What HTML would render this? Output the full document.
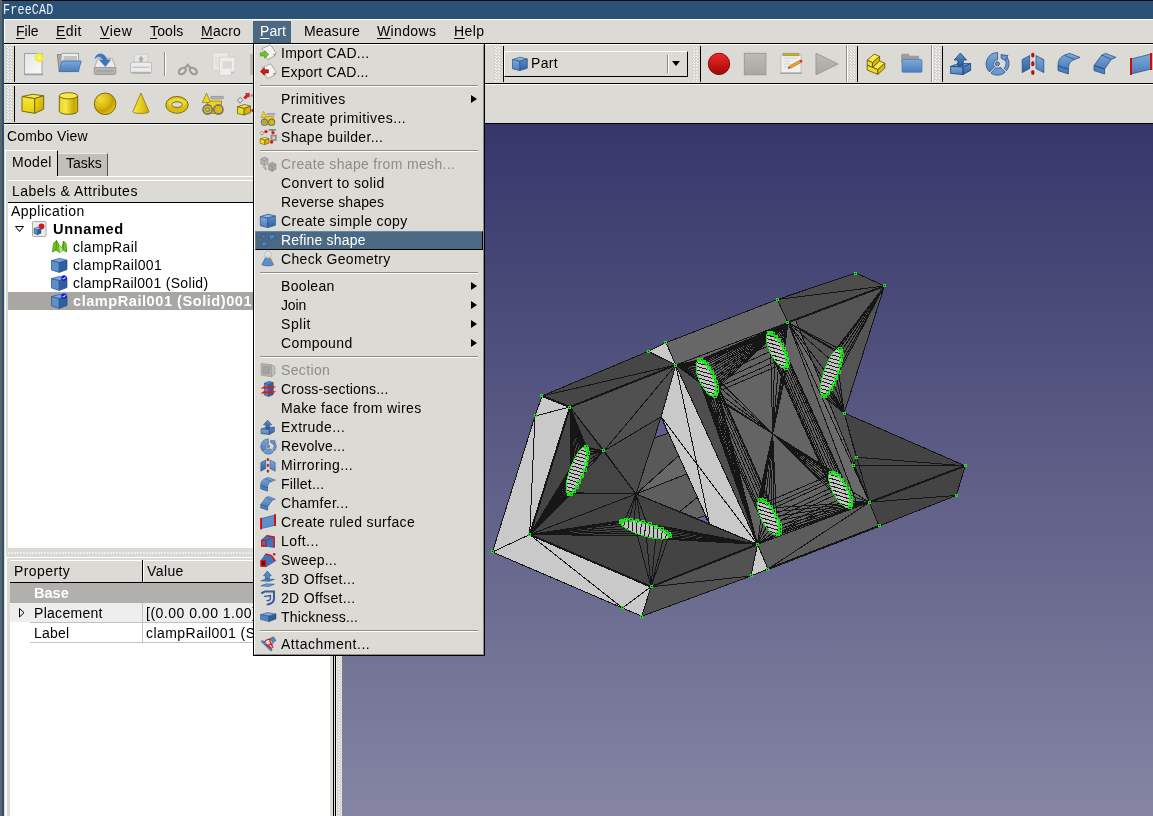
<!DOCTYPE html>
<html>
<head>
<meta charset="utf-8">
<title>FreeCAD</title>
<style>
html,body{margin:0;padding:0;}
body{width:1153px;height:816px;overflow:hidden;position:relative;background:#dcdad5;font-family:"Liberation Sans",sans-serif;font-size:14px;letter-spacing:0.25px;color:#000;}
.abs{position:absolute;}
.t{will-change:transform;position:absolute;white-space:nowrap;line-height:16px;height:16px;}
u{text-decoration:underline;text-underline-offset:2px;text-decoration-thickness:1px;}
#frameL{left:0;top:0;width:2px;height:816px;background:#5e6468;}
#frameL2{left:2px;top:0;width:2px;height:816px;background:#2a5277;}
#title{left:2px;top:0;width:1151px;height:19px;background:#2a5277;border-top:1px solid #0a0a0a;box-sizing:border-box;}
#titletxt{will-change:transform;left:3px;top:2px;font-family:"Liberation Mono",monospace;font-size:11.7px;color:#eef2f6;line-height:16px;transform:scaleY(1.18);transform-origin:0 50%;letter-spacing:0.2px;}
.hline{position:absolute;height:1px;}
.vline{position:absolute;width:1px;}
.handle{position:absolute;width:7px;background-color:#d6d4cf;background-image:radial-gradient(circle at 0.5px 0.5px,#fff 0.55px,rgba(255,255,255,0) 0.75px),radial-gradient(circle at 0.5px 0.5px,#fff 0.55px,rgba(255,255,255,0) 0.75px);background-size:3px 3px,3px 3px;background-position:1px 1px,2px 2px;}
.sep{position:absolute;left:9px;width:216px;height:1px;background:#8e8c88;border-bottom:1px solid #fff;}
.mi{position:absolute;left:30px;white-space:nowrap;line-height:16px;}
.arrow{position:absolute;left:220px;width:0;height:0;border-left:6px solid #000;border-top:4.5px solid transparent;border-bottom:4.5px solid transparent;}
.ico{position:absolute;}
</style>
</head>
<body>
<!-- window frame -->
<div id="frameL" class="abs"></div>
<div id="frameL2" class="abs"></div>
<div id="title" class="abs"></div>
<div id="titletxt" class="abs">FreeCAD</div>

<!-- menubar -->
<div class="hline" style="left:4px;top:19px;width:1149px;background:#fff;"></div>
<div class="vline" style="left:4px;top:19px;height:24px;background:#fff;"></div>
<div id="menubar" class="abs" style="left:5px;top:20px;width:1148px;height:23px;background:#dcdad5;"></div>
<div class="abs" style="left:253px;top:21px;width:38px;height:22px;background:#4b6983;"></div>
<div class="t" style="left:16.0px;top:23px;letter-spacing:0.03px;"><u>F</u>ile</div>
<div class="t" style="left:56.3px;top:23px;letter-spacing:0.39px;"><u>E</u>dit</div>
<div class="t" style="left:99.8px;top:23px;letter-spacing:0.55px;"><u>V</u>iew</div>
<div class="t" style="left:150.1px;top:23px;letter-spacing:0.14px;"><u>T</u>ools</div>
<div class="t" style="left:201.3px;top:23px;letter-spacing:0.24px;"><u>M</u>acro</div>
<div class="t" style="left:259.6px;top:23px;color:#fff;letter-spacing:0.08px;"><u>P</u>art</div>
<div class="t" style="left:303.6px;top:23px;letter-spacing:0.20px;">Measure</div>
<div class="t" style="left:377.3px;top:23px;letter-spacing:0.36px;"><u>W</u>indows</div>
<div class="t" style="left:454.2px;top:23px;letter-spacing:0.43px;"><u>H</u>elp</div>
<div class="hline" style="left:4px;top:43px;width:1149px;background:#000;height:1px;"></div>
<div class="hline" style="left:4px;top:44px;width:1149px;background:#fff;"></div>

<!-- toolbar row 1 -->
<div id="tb1" class="abs" style="left:4px;top:45px;width:1149px;height:38px;background:#dcdad5;"></div>
<div class="hline" style="left:4px;top:83px;width:1149px;background:#000;height:1px;"></div>
<div class="hline" style="left:4px;top:84px;width:1149px;background:#fff;"></div>
<!-- toolbar row 2 -->
<div id="tb2" class="abs" style="left:4px;top:85px;width:1149px;height:38px;background:#dcdad5;"></div>
<div class="hline" style="left:4px;top:123px;width:1149px;background:#000;height:1px;"></div>
<div class="hline" style="left:4px;top:124px;width:340px;background:#fff;"></div>

<!-- toolbar handles / separators -->
<div class="handle" style="left:6px;top:46px;height:35px;"></div>
<div class="vline" style="left:14px;top:46px;height:36px;background:#000;width:1px;"></div>
<div class="handle" style="left:6px;top:86px;height:35px;"></div>
<div class="vline" style="left:14px;top:86px;height:36px;background:#000;width:1px;"></div>
<div class="vline" style="left:164px;top:52px;height:24px;background:#8e8c88;"></div>
<div class="vline" style="left:165px;top:52px;height:24px;background:#fff;"></div>
<div class="handle" style="left:494px;top:46px;height:35px;"></div>
<div class="vline" style="left:503px;top:46px;height:36px;background:#000;width:1px;"></div>
<div class="handle" style="left:692px;top:46px;height:35px;"></div>
<div class="vline" style="left:700px;top:46px;height:36px;background:#000;width:1px;"></div>
<div class="vline" style="left:846px;top:45px;height:37px;background:#8e8c88;"></div>
<div class="vline" style="left:847px;top:45px;height:37px;background:#fff;"></div>
<div class="handle" style="left:849px;top:46px;height:35px;"></div>
<div class="vline" style="left:857px;top:46px;height:36px;background:#000;width:1px;"></div>
<div class="vline" style="left:931px;top:45px;height:37px;background:#8e8c88;"></div>
<div class="vline" style="left:932px;top:45px;height:37px;background:#fff;"></div>
<div class="handle" style="left:934px;top:46px;height:35px;"></div>
<div class="vline" style="left:942px;top:46px;height:36px;background:#000;width:1px;"></div>
<!-- workbench combo -->
<div class="abs" style="left:504px;top:51px;width:184px;height:26px;box-sizing:border-box;border-top:1.5px solid #fff;border-left:1.5px solid #fff;border-right:1.5px solid #000;border-bottom:1.5px solid #000;background:#dcdad5;"></div>
<div class="vline" style="left:667px;top:55px;height:18px;background:#8e8c88;"></div>
<div class="vline" style="left:668px;top:55px;height:18px;background:#fff;"></div>
<div class="abs" style="left:672px;top:61px;width:0;height:0;border-top:5px solid #000;border-left:4.5px solid transparent;border-right:4.5px solid transparent;"></div>
<div class="t" style="left:531px;top:55px;letter-spacing:0.3px;">Part</div>

<svg class="abs" style="left:0;top:0;" width="1153" height="124" viewBox="0 0 1153 124">
<defs>
<linearGradient id="gPage" x1="0" y1="0" x2="1" y2="1"><stop offset="0" stop-color="#e4e4e4"/><stop offset="1" stop-color="#fafafa"/></linearGradient>
<radialGradient id="gGlow"><stop offset="0" stop-color="#ffffe0"/><stop offset="0.35" stop-color="#f8f040"/><stop offset="0.8" stop-color="#f2ea30" stop-opacity="0.85"/><stop offset="1" stop-color="#f2ea30" stop-opacity="0"/></radialGradient>
<linearGradient id="gBlue" x1="0" y1="0" x2="0" y2="1"><stop offset="0" stop-color="#7fa8d8"/><stop offset="1" stop-color="#4a7ebd"/></linearGradient>
<linearGradient id="gBlueD" x1="0" y1="0" x2="0" y2="1"><stop offset="0" stop-color="#5d8fcb"/><stop offset="1" stop-color="#2f5f9f"/></linearGradient>
<linearGradient id="gGrey" x1="0" y1="0" x2="0" y2="1"><stop offset="0" stop-color="#bdbbb7"/><stop offset="1" stop-color="#a9a7a3"/></linearGradient>
<linearGradient id="gRed" x1="0" y1="0" x2="0" y2="1"><stop offset="0" stop-color="#f02a2a"/><stop offset="1" stop-color="#a00606"/></linearGradient>
<linearGradient id="gYelF" x1="0" y1="0" x2="0" y2="1"><stop offset="0" stop-color="#f7e63a"/><stop offset="1" stop-color="#e6cf10"/></linearGradient>
<linearGradient id="gYelR" x1="0" y1="0" x2="1" y2="1"><stop offset="0" stop-color="#f2dc18"/><stop offset="1" stop-color="#c4a400"/></linearGradient>
<linearGradient id="gCyl" x1="0" y1="0" x2="1" y2="0"><stop offset="0" stop-color="#e8d020"/><stop offset="0.35" stop-color="#f8e848"/><stop offset="0.8" stop-color="#c8a800"/><stop offset="1" stop-color="#d8bc10"/></linearGradient>
<radialGradient id="gSph" cx="0.3" cy="0.28" r="0.75"><stop offset="0" stop-color="#f0dc38"/><stop offset="0.55" stop-color="#d8b810"/><stop offset="0.75" stop-color="#c4a000"/><stop offset="1" stop-color="#e0c418"/></radialGradient>
<linearGradient id="gCone" x1="0" y1="0" x2="1" y2="0"><stop offset="0" stop-color="#f6e640"/><stop offset="0.5" stop-color="#e8d020"/><stop offset="1" stop-color="#c8a800"/></linearGradient>
</defs>
<!-- new -->
<g>
<rect x="24" y="73.5" width="19" height="1.8" fill="#8a8a88" opacity="0.7"/>
<rect x="24.5" y="53.5" width="17.5" height="20.5" fill="url(#gPage)" stroke="#a2a2a0" stroke-width="1"/>
<circle cx="39.3" cy="57.6" r="5.2" fill="url(#gGlow)"/>
</g>
<!-- open -->
<g>
<path d="M57.3 54.6 L61.5 54.6 L62.5 53.4 L78.5 53.4 L78.8 71.5 L59.2 71.5 Z" fill="#a8a8a6" stroke="#7c7c7a" stroke-width="0.8"/>
<path d="M61.8 53.6 L78.4 53.6 L78.4 62 L60.5 66 Z" fill="#efefef" stroke="#9a9a98" stroke-width="0.6"/>
<rect x="63.5" y="56" width="13.5" height="5" fill="#c2c2c0"/>
<path d="M62 61 L81.2 61 L78.2 71.6 L59 71.6 Z" fill="url(#gBlue)" stroke="#3f74b4" stroke-width="0.9"/>
</g>
<!-- save -->
<g>
<path d="M98 58.4 L112.2 58.4 L115.8 68 L94.2 68 Z" fill="#ececec" stroke="#a0a09e" stroke-width="0.8"/>
<rect x="94.3" y="67.6" width="21.4" height="6.8" rx="1" fill="#b7b7b5" stroke="#8c8c8a" stroke-width="0.8"/>
<rect x="96.5" y="69.8" width="17" height="2.6" fill="#a6a6a4"/>
<path d="M95 59 C95 53.5 103.5 50.5 107.3 59.8 L110.8 59.8 L105.4 66.8 L99 59.8 L102.6 59.8 C101.5 56.2 97 55.6 95 59 Z" fill="#3d73b8" stroke="#5d8ed0" stroke-width="0.5"/>
</g>
<!-- print -->
<g>
<rect x="134.3" y="54.2" width="13.6" height="9" fill="#e6e6e6" stroke="#c8c8c6" stroke-width="0.7"/>
<path d="M141 56 L143.9 59.2 L142.4 59.2 L142.4 62.2 L139.6 62.2 L139.6 59.2 L138.1 59.2 Z" fill="#aaaaa8"/>
<rect x="130.6" y="62.2" width="20.9" height="11.2" rx="2.2" fill="#ececec" stroke="#b4b4b2" stroke-width="0.9"/>
<rect x="132.3" y="66.4" width="17.4" height="1.5" rx="0.7" fill="#c6c6c4"/>
<rect x="131.4" y="71.8" width="19.3" height="1.8" rx="0.9" fill="#b0b0ae"/>
</g>
<!-- cut -->
<g fill="none">
<path d="M181.2 53.4 L183 53 L191.3 66.5 L189 67.5 Z" fill="#e2e1dd" stroke="#cfcdc8" stroke-width="0.6"/>
<path d="M194.3 53.4 L192.5 53 L184.2 66.5 L186.5 67.5 Z" fill="#e2e1dd" stroke="#cfcdc8" stroke-width="0.6"/>
<ellipse cx="182.3" cy="71" rx="4" ry="2.7" transform="rotate(-38 182.3 71)" stroke="#9c9a96" stroke-width="2.1"/>
<ellipse cx="193.3" cy="71" rx="4" ry="2.7" transform="rotate(38 193.3 71)" stroke="#9c9a96" stroke-width="2.1"/>
<path d="M185 68 L187.8 64.8 L190.5 68" stroke="#9c9a96" stroke-width="2"/>
</g>
<!-- copy -->
<g>
<rect x="212.7" y="52.8" width="15.6" height="17.7" fill="#e9e8e5" stroke="#d0cfcb" stroke-width="0.8"/>
<path d="M215 58h7M215 60.5h7M215 63h7M215 65.5h7" stroke="#d4d3cf" stroke-width="0.8"/>
<path d="M219.6 57.2 L234.8 57.2 L234.8 71.5 L230.8 75.3 L219.6 75.3 Z" fill="#efeeec" stroke="#cfcecb" stroke-width="0.8"/>
<path d="M234.8 71.5 L230.8 75.3 L230.8 71.5 Z" fill="#c4c3c0"/>
<rect x="222.5" y="61.2" width="9.5" height="7.5" fill="#dadad8"/>
</g>
<!-- paste (clipped by menu) -->
<rect x="250.3" y="54" width="3" height="21" fill="#b4b2ae"/>
<!-- cube -->
<g stroke="#6e5e08" stroke-width="0.9" stroke-linejoin="round">
<path d="M22 96.5 L32.6 94.3 L43.7 95.8 L34.7 98.6 Z" fill="#f8ea48"/>
<path d="M22 96.5 L34.7 98.6 L34.7 113.3 L22 111.2 Z" fill="url(#gYelF)"/>
<path d="M34.7 98.6 L43.7 95.8 L43.7 109.2 L34.7 113.3 Z" fill="url(#gYelR)"/>
</g>
<!-- cylinder -->
<g stroke="#6e5e08" stroke-width="0.9">
<path d="M59.3 95.8 L59.3 111.3 A9.2 3 0 0 0 77.7 111.3 L77.7 95.8 Z" fill="url(#gCyl)"/>
<ellipse cx="68.5" cy="95.8" rx="9.2" ry="3.1" fill="#f8e848"/>
</g>
<!-- sphere -->
<circle cx="105.1" cy="103.8" r="10.8" fill="url(#gSph)" stroke="#6e5e08" stroke-width="0.9"/>
<!-- cone -->
<path d="M140.9 93 L149 111.8 A8 1.6 0 0 1 132.8 111.8 Z" fill="url(#gCone)" stroke="#8a7608" stroke-width="0.8" stroke-linejoin="round"/>
<!-- torus -->
<g>
<ellipse cx="177" cy="104.9" rx="11.2" ry="8.4" fill="#e4c818" stroke="#6e5e08" stroke-width="0.9"/>
<ellipse cx="177" cy="106.2" rx="9.5" ry="6" fill="#d0b208" opacity="0.55"/>
<ellipse cx="177" cy="103.3" rx="8.5" ry="4.6" fill="#f2e040" opacity="0.8"/>
<ellipse cx="177" cy="104.6" rx="5.4" ry="2.8" fill="#dcdad5" stroke="#6e5e08" stroke-width="0.9"/>
</g>
<!-- primitives -->
<g id="icoPrims">
<path d="M206.5 93.2 L210.6 102.6 L202.4 102.6 Z" fill="#f0d820" stroke="#8a7608" stroke-width="0.7"/>
<rect x="210.6" y="96.4" width="13" height="2.4" rx="1.2" fill="#b8b8b4" stroke="#808480" stroke-width="0.7"/>
<path d="M207 103.5 L211 101 L221.5 101 L221.5 113.5 L207 113.5 Z" fill="#ecd418" stroke="#8a7608" stroke-width="0.7"/>
<circle cx="207.6" cy="109.5" r="4.6" fill="#d8c030" stroke="#70746e" stroke-width="1.6"/>
<circle cx="207.6" cy="109.5" r="2" fill="none" stroke="#70746e" stroke-width="1"/>
<circle cx="218.4" cy="109.5" r="4.6" fill="#dcb808" stroke="#70746e" stroke-width="1.6"/>
</g>
<!-- builder (clipped) -->
<g>
<path d="M240.2 97.3 L243 100.2 L240.2 103.2 L237.4 100.2 Z" fill="#dcdad5" stroke="#7c8486" stroke-width="1"/>
<path d="M243.6 97.4 L246.4 94.6 L245.2 93.6 L249.4 93.2 L249.2 97.4 L248.2 96.4 L245.4 99.2 Z" fill="#e01818" stroke="#b00808" stroke-width="0.4"/>
<rect x="250.5" y="94.4" width="2.7" height="2.2" fill="#90908e"/>
<path d="M237.5 106.8 L244.5 104.5 L250.5 106.2 L244.2 108.4 Z" fill="#f8ea48" stroke="#6e5e08" stroke-width="0.8"/>
<path d="M237.5 106.8 L244.2 108.4 L244.2 115 L237.5 113.5 Z" fill="#f2dc20" stroke="#6e5e08" stroke-width="0.8"/>
<path d="M244.2 108.4 L250.5 106.2 L250.5 112.6 L244.2 115 Z" fill="#d4b408" stroke="#6e5e08" stroke-width="0.8"/>
<circle cx="253" cy="110.5" r="1.8" fill="#e01818"/>
</g>
<!-- combo cube -->
<g id="icoCube" stroke="#27518a" stroke-width="0.7" stroke-linejoin="round">
<path d="M512.5 59.6 L520 57.2 L527.3 59 L519.8 61.2 Z" fill="#8bb4e4"/>
<path d="M512.5 59.6 L519.8 61.2 L519.8 70.6 L512.5 68.8 Z" fill="url(#gBlue)"/>
<path d="M519.8 61.2 L527.3 59 L527.3 68.2 L519.8 70.6 Z" fill="url(#gBlueD)"/>
</g>
<!-- record -->
<circle cx="719" cy="63.9" r="10.7" fill="url(#gRed)" stroke="#7a0a0a" stroke-width="0.9"/>
<!-- stop -->
<rect x="744.3" y="53.3" width="21.6" height="21.5" fill="url(#gGrey)" stroke="#989692" stroke-width="0.9"/>
<!-- notepad -->
<g>
<rect x="780.3" y="72.2" width="21.4" height="1.8" fill="#a4a4a2"/>
<rect x="781" y="55" width="20" height="17.6" fill="#f0f0ee" stroke="#b8b8b6" stroke-width="0.8"/>
<rect x="783" y="53.2" width="16" height="2.6" fill="#c8b040" stroke="#9a8420" stroke-width="0.5"/>
<path d="M784 58.2h13M784 61h6M784 64h6M784 67h6" stroke="#cfcfcd" stroke-width="1"/>
<path d="M788 68.6 L789.8 65.6 L799.6 60.4 L801 62.6 L791.2 68 Z" fill="#e8a028" stroke="#a87010" stroke-width="0.5"/>
<path d="M799.2 60.6 L801.4 59.6 L802.6 61.4 L800.8 62.8 Z" fill="#e03030"/>
<path d="M788 68.6 L789.2 66.6 L790 67.8 Z" fill="#444"/>
</g>
<!-- play -->
<path d="M816 53.2 L838.2 64 L816 74.8 Z" fill="url(#gGrey)" stroke="#989692" stroke-width="0.9" stroke-linejoin="round"/>
<!-- stair -->
<g stroke="#5a4e08" stroke-width="0.8" stroke-linejoin="round">
<path d="M867.2 60.2 L874.2 54 L879.6 56.4 L872.6 62.6 Z" fill="#f8ea48"/>
<path d="M867.2 60.2 L872.6 62.6 L872.6 67.4 L867.2 65.2 Z" fill="#f0dc28"/>
<path d="M872.6 62.6 L879.6 56.4 L879.6 61 L872.6 67.4 Z" fill="#d8bc10"/>
<path d="M872.6 67.4 L879.6 61 L884.8 63.2 L877.8 69.6 Z" fill="#f8ea48"/>
<path d="M867.2 65.2 L877.8 69.6 L877.8 74.4 L867.2 70 Z" fill="#f0dc28"/>
<path d="M877.8 69.6 L884.8 63.2 L884.8 68 L877.8 74.4 Z" fill="#d8bc10"/>
</g>
<!-- folder -->
<g>
<path d="M901.6 55.2 Q901.6 54.2 902.6 54.2 L908.4 54.2 L909.6 56.2 L918.6 56.2 L918.6 62 L901.6 62 Z" fill="#9c9c9a" stroke="#8a8a88" stroke-width="0.6"/>
<rect x="902" y="59.4" width="20" height="12.8" rx="1" fill="url(#gBlue)" stroke="#4a7ebd" stroke-width="0.8"/>
</g>
<!-- extrude -->
<g id="icoExtrude" stroke="#1e4478" stroke-width="0.8" stroke-linejoin="round">
<path d="M950.6 66.4 L958.2 63.6 L970.6 63.6 L963 67.2 Z" fill="#6a9ad4"/>
<path d="M950.6 66.4 L963 67.2 L963 74.6 L950.6 73.4 Z" fill="url(#gBlue)"/>
<path d="M963 67.2 L970.6 63.6 L970.6 70.4 L963 74.6 Z" fill="url(#gBlueD)"/>
<path d="M960.4 53 L966.6 60 L963.2 60 L963.2 65.4 L957.8 65.4 L957.8 60 L954.2 60 Z" fill="url(#gBlueD)"/>
</g>
<!-- revolve -->
<g id="icoRevolve">
<path d="M997.6 52.6 A11.3 11.3 0 0 0 989.6 72 L994.7 66.6 A4 4 0 0 1 997.6 59.8 Z" fill="url(#gBlue)" stroke="#1e4478" stroke-width="0.7"/>
<path d="M991 73.2 A11.3 11.3 0 0 0 1005.2 72.2 L1000.4 67.2 A4 4 0 0 1 995.8 67.6 Z" fill="#6a9ad4" stroke="#1e4478" stroke-width="0.7"/>
<path d="M1006.4 70.8 A11.3 11.3 0 0 0 1007.4 57.6 L1004.6 58.6 A8.5 8.5 0 0 1 1004.2 68.4 Z" fill="#6a9ad4" stroke="#1e4478" stroke-width="0.7"/>
<path d="M1001 54.6 L1008 55.6 L1005 60.4 L1001.2 58.4 Z" fill="#6a9ad4" stroke="#1e4478" stroke-width="0.7"/>
<circle cx="997.4" cy="63.8" r="2" fill="#6a9ad4" stroke="#1e4478" stroke-width="0.8"/>
</g>
<!-- mirror -->
<g id="icoMirror"><g stroke="#1e4478" stroke-width="0.7" stroke-linejoin="round">
<path d="M1022.2 59.6 L1029.6 55.6 L1029.6 68.6 L1022.2 72.6 Z" fill="url(#gBlueD)"/>
<path d="M1036 55.6 L1043.8 59.6 L1043.8 72.6 L1036 68.6 Z" fill="url(#gBlue)"/>
</g>
<g fill="#c80c0c" stroke="#7a0606" stroke-width="0.4">
<rect x="1031.5" y="53" width="2.6" height="4.2" rx="1.2"/><rect x="1031.5" y="61.6" width="2.6" height="4.4" rx="1.2"/><rect x="1031.5" y="70.4" width="2.6" height="4.2" rx="1.2"/>
</g></g>
<!-- fillet -->
<g id="icoFillet" stroke="#1e4478" stroke-width="0.7" stroke-linejoin="round">
<path d="M1058 65.8 C1058 59 1061 55.5 1069.8 53.4 L1080 57.4 L1074.6 59.4 C1070 61 1068.4 64 1068.4 69.2 Z" fill="url(#gBlue)"/>
<path d="M1058 65.8 L1068.4 69.2 L1068.4 74 L1058 70.6 Z" fill="#4a7ebd"/>
<path d="M1064.5 55.4 L1074.6 59.4" fill="none"/>
</g>
<!-- chamfer -->
<g id="icoChamfer" stroke="#1e4478" stroke-width="0.7" stroke-linejoin="round">
<path d="M1094 65.6 L1101.8 55 L1105.8 53.4 L1116 57.4 L1111.2 59.4 L1104.6 69 Z" fill="url(#gBlue)"/>
<path d="M1094 65.6 L1104.6 69 L1104.6 74 L1094 70.6 Z" fill="#4a7ebd"/>
<path d="M1101.8 55 L1111.2 59.4" fill="none"/>
</g>
<!-- ruled -->
<g id="icoRuled">
<path d="M1131 59 L1151 54 L1151 69 L1131 74 Z" fill="url(#gBlue)" stroke="#1e4478" stroke-width="0.7"/>
<rect x="1130" y="58" width="2" height="17" fill="#d40808"/>
<rect x="1150" y="53" width="2.2" height="17" fill="#d40808"/>
</g>
</svg>


<!-- combo view dock -->
<div class="t" style="left:6.5px;top:128px;letter-spacing:0.17px;">Combo View</div>
<!-- tabs -->
<div class="abs" style="left:58px;top:153px;width:50px;height:23px;background:#c1bfba;border-top:1px solid #eceae6;border-right:1.5px solid #55534f;box-sizing:border-box;"></div>
<div class="abs" style="left:5px;top:150px;width:53px;height:27px;background:#dcdad5;border-top:1.5px solid #fff;border-left:1px solid #fff;border-right:1.5px solid #000;box-sizing:border-box;"></div>
<div class="hline" style="left:57px;top:176px;width:277px;background:#fff;"></div>
<div class="vline" style="left:5px;top:176px;height:640px;background:#fff;"></div>
<div class="t" style="left:11.5px;top:154px;letter-spacing:0.33px;">Model</div>
<div class="t" style="left:65.5px;top:155px;letter-spacing:0.00px;">Tasks</div>
<!-- tree header -->
<div class="hline" style="left:8px;top:180px;width:323px;background:#fff;"></div>
<div class="t" style="left:11.5px;top:183px;letter-spacing:0.48px;">Labels &amp; Attributes</div>
<div class="hline" style="left:8px;top:202px;width:323px;background:#000;"></div>
<!-- tree -->
<div class="abs" style="left:8px;top:203px;width:322px;height:345px;background:#fff;"></div>
<div class="t" style="left:10.5px;top:203px;letter-spacing:0.48px;">Application</div>
<div class="t" style="left:52.5px;top:221px;font-weight:bold;font-size:14.6px;letter-spacing:0.61px;">Unnamed</div>
<div class="t" style="left:73.0px;top:239px;letter-spacing:0.35px;">clampRail</div>
<div class="t" style="left:73.0px;top:257px;letter-spacing:0.36px;">clampRail001</div>
<div class="t" style="left:73.0px;top:275px;letter-spacing:0.31px;">clampRail001 (Solid)</div>
<div class="abs" style="left:8px;top:292px;width:322px;height:18px;background:#a9a7a3;"></div>
<div class="t" style="left:73.0px;top:293px;font-weight:bold;color:#fff;font-size:14.6px;letter-spacing:0.52px;">clampRail001 (Solid)001</div>
<!-- splitter -->
<div class="abs" style="left:8px;top:552px;width:323px;height:2px;background-image:radial-gradient(circle at 0.5px 0.5px,#fff 0.55px,rgba(255,255,255,0) 0.75px),radial-gradient(circle at 0.5px 0.5px,#fff 0.55px,rgba(255,255,255,0) 0.75px);background-size:3px 3px,3px 3px;background-position:0 0,1px 1px;"></div>
<!-- property view -->
<div class="hline" style="left:6px;top:557px;width:328px;background:#fff;"></div>
<div class="vline" style="left:6px;top:557px;height:259px;background:#fff;"></div>
<div class="hline" style="left:10px;top:560px;width:321px;background:#fff;"></div>
<div class="t" style="left:14.0px;top:563px;letter-spacing:0.42px;">Property</div>
<div class="t" style="left:146.5px;top:563px;letter-spacing:0.40px;">Value</div>
<div class="vline" style="left:142px;top:560px;height:22px;background:#000;"></div>
<div class="vline" style="left:143px;top:560px;height:22px;background:#fff;"></div>
<div class="hline" style="left:10px;top:582px;width:321px;background:#000;"></div>
<div class="abs" style="left:10px;top:583px;width:320px;height:233px;background:#fff;"></div>
<div class="abs" style="left:10px;top:583px;width:320px;height:20px;background:#b2b0ac;"></div>
<div class="t" style="left:33.5px;top:585px;font-weight:bold;color:#fff;font-size:14.6px;letter-spacing:-0.02px;">Base</div>
<div class="abs" style="left:10px;top:603px;width:320px;height:19px;background:#eeeeee;"></div>
<div class="t" style="left:33.5px;top:605px;letter-spacing:0.29px;">Placement</div>
<div class="t" style="left:146px;top:605px;letter-spacing:0.5px;">[(0.00 0.00 1.00); 0.00 &deg;; (0.00 0.00 0.00)]</div>
<div class="hline" style="left:30px;top:622px;width:300px;background:#c4c2be;"></div>
<div class="t" style="left:33.5px;top:625px;letter-spacing:0.19px;">Label</div>
<div class="t" style="left:146px;top:625px;letter-spacing:0.45px;">clampRail001 (Solid)001</div>
<div class="hline" style="left:30px;top:642px;width:300px;background:#c4c2be;"></div>
<div class="vline" style="left:142px;top:603px;height:40px;background:#c4c2be;"></div>
<!-- dock right edge / splitter -->
<div class="abs" style="left:330px;top:124px;width:12px;height:692px;background:#dcdad5;"></div>
<div class="vline" style="left:333px;top:124px;height:692px;background:#000;"></div>
<div class="vline" style="left:335px;top:124px;height:692px;background:#000;"></div>
<div class="vline" style="left:336px;top:124px;height:692px;background:#f0efec;"></div>
<div class="abs" style="left:337px;top:124px;width:4px;height:692px;background-color:#d6d4cf;background-image:radial-gradient(circle at 0.5px 0.5px,#fff 0.55px,rgba(255,255,255,0) 0.75px),radial-gradient(circle at 0.5px 0.5px,#fff 0.55px,rgba(255,255,255,0) 0.75px);background-size:3px 3px,3px 3px;background-position:1px 1px,2px 2px;"></div>
<div class="vline" style="left:341px;top:124px;height:692px;background:#e6e5e1;"></div>
<svg class="abs" style="left:0;top:200px;" width="260" height="440" viewBox="0 200 260 440">
<!-- tree expander -->
<path d="M15.5 226.5 L23.5 226.5 L19.5 231.5 Z" fill="#fff" stroke="#000" stroke-width="1"/>
<!-- doc icon -->
<rect x="32.5" y="221.5" width="13.5" height="15" rx="1" fill="#ececea" stroke="#9a9a98" stroke-width="0.8"/>
<circle cx="41.5" cy="226.4" r="2.9" fill="#e01414"/>
<path d="M34 228.6 L37.6 227 L41 228.4 L37.4 230 Z" fill="#8bb4e4" stroke="#27518a" stroke-width="0.5"/>
<path d="M34 228.6 L37.4 230 L37.4 234.8 L34 233.4 Z" fill="#5d8fcb" stroke="#27518a" stroke-width="0.5"/>
<path d="M37.4 230 L41 228.4 L41 233.2 L37.4 234.8 Z" fill="#2f5f9f" stroke="#27518a" stroke-width="0.5"/>
<!-- mesh icon -->
<path d="M52.5 252 L53.5 243.5 L56.5 240.5 L59 245 L62 248.5 L63.5 241 L66 243.5 L66.6 252 L63 250 L59.5 252.6 L56 250 Z" fill="#6ec820" stroke="#3a8a08" stroke-width="0.8" stroke-linejoin="round"/>
<path d="M56.5 240.5 L56 250 M59 245 L59.5 252.6 M63.5 241 L63 250" stroke="#3a8a08" stroke-width="0.8" fill="none"/>
<path d="M59 245 L62 248.5 L63 250 L59.5 252.6 Z" fill="#b8e878"/>
<!-- cube icons -->
<g id="tcube" stroke="#27518a" stroke-width="0.7" stroke-linejoin="round">
<path d="M51.5 260.6 L59.5 258.4 L67 260.2 L59.3 262.6 Z" fill="#7daae0"/>
<path d="M51.5 260.6 L59.3 262.6 L59.3 272.4 L51.5 270 Z" fill="#5d8fcb"/>
<path d="M59.3 262.6 L67 260.2 L67 269.6 L59.3 272.4 Z" fill="#2f5f9f"/>
</g>
<use href="#tcube" y="18"/>
<use href="#tcube" y="36"/>
<circle cx="64" cy="278" r="2.8" fill="#1818e8"/>
<path d="M62.6 278 L63.7 279.2 L65.6 276.8" stroke="#fff" stroke-width="1" fill="none"/>
<circle cx="64" cy="296" r="2.8" fill="#1818e8"/>
<path d="M62.6 296 L63.7 297.2 L65.6 294.8" stroke="#fff" stroke-width="1" fill="none"/>
<!-- property expander -->
<path d="M19.5 608.5 L24 612.7 L19.5 617 Z" fill="none" stroke="#000" stroke-width="1"/>
</svg>


<!-- 3D VIEW -->
<div id="view3d" class="abs" style="left:342px;top:124px;width:811px;height:692px;background:linear-gradient(#36366a,#8585a3);overflow:hidden;">
<!-- MODEL-START -->
<svg class="abs" style="left:-342px;top:-124px;" width="1153" height="816" viewBox="0 0 1153 816">
<polygon points="542.0,396.0 648.2,351.4 675.8,365.0 570.0,407.0" fill="#464646" />
<polygon points="666.0,342.7 777.2,299.5 788.0,322.5 675.8,365.0" fill="#676767" />
<polygon points="777.2,299.5 856.0,273.0 884.4,286.0 788.0,322.5" fill="#4d4d4d" />
<polygon points="788.0,322.5 884.4,286.0 844.2,413.0 856.2,457.2 853.4,465.8 869.4,502.2" fill="#545454" />
<polygon points="844.2,413.0 965.2,465.8 956.4,495.4 879.0,526.0 869.4,502.2 853.4,465.8 856.2,457.2" fill="#444444" />
<polygon points="675.8,365.0 788.0,322.5 869.4,502.2 757.5,544.3" fill="#646464" />
<polygon points="788.0,322.5 795.5,320.0 869.4,502.2 857.0,503.5" fill="#6b6b6b" />
<polygon points="757.5,544.3 869.4,502.2 879.0,526.0 768.0,569.0" fill="#5c5c5c" />
<polygon points="570.0,407.0 675.8,365.0 661.1,416.8 654.3,438.0 636.0,494.0 529.7,534.6" fill="#4a4a4a" />
<polygon points="661.1,416.8 668.0,433.3 654.3,438.0" fill="#5e5e8e" />
<polygon points="654.3,438.0 668.0,433.3 709.5,524.0 696.6,518.4 636.0,494.0" fill="#5a5a5a" />
<polygon points="654.3,438.0 668.0,433.3 678.7,455.6 636.0,494.0" fill="#595959" />
<polygon points="636.0,494.0 678.7,455.6 686.7,474.0" fill="#686868" />
<polygon points="636.0,494.0 686.7,474.0 696.9,497.7 680.5,511.0" fill="#5e5e5e" />
<polygon points="680.5,511.0 696.9,497.7 705.0,515.7 696.6,518.4" fill="#646464" />
<polygon points="675.8,365.0 698.5,367.5 757.5,544.3" fill="#4e4e4e" />
<polygon points="696.6,518.4 705.0,515.7 709.5,524.0" fill="#66669a" />
<polygon points="529.7,534.6 636.0,494.0 696.6,518.4 709.5,524.0 757.5,544.3 651.0,586.8" fill="#434343" />
<polygon points="651.0,586.8 757.5,544.3 751.0,576.0 641.8,616.2" fill="#525252" />
<polygon points="542.0,396.0 535.0,416.0 492.4,552.0 529.7,534.6 570.0,407.0" fill="#c9c9c9" />
<polygon points="492.4,552.0 622.5,608.0 641.8,616.2 651.0,586.8 529.7,534.6" fill="#c9c9c9" />
<polygon points="648.2,351.4 666.0,342.7 675.8,365.0" fill="#c9c9c9" />
<polygon points="675.8,365.0 661.1,416.8 709.5,524.0 757.5,544.3" fill="#c9c9c9" />
<polygon points="757.5,544.3 768.0,569.0 751.0,576.0" fill="#c9c9c9" />
<polygon points="570.0,407.0 604.0,450.8 636.0,494.0 529.7,534.6" fill="#454545"/>
<polygon points="570.0,407.0 675.8,365.0 661.1,416.8 604.0,450.8" fill="#505050"/>
<polygon points="604.0,450.8 661.1,416.8 654.3,438.0 636.0,494.0" fill="#4c4c4c"/>
<g stroke="#161616" shape-rendering="crispEdges" fill="none">
<line x1="542.0" y1="396.0" x2="648.2" y2="351.4" stroke-width="1"/>
<line x1="648.2" y1="351.4" x2="666.0" y2="342.7" stroke-width="1"/>
<line x1="666.0" y1="342.7" x2="777.2" y2="299.5" stroke-width="1"/>
<line x1="777.2" y1="299.5" x2="856.0" y2="273.0" stroke-width="1"/>
<line x1="856.0" y1="273.0" x2="884.4" y2="286.0" stroke-width="1"/>
<line x1="884.4" y1="286.0" x2="788.0" y2="322.5" stroke-width="1"/>
<line x1="777.2" y1="299.5" x2="788.0" y2="322.5" stroke-width="1"/>
<line x1="788.0" y1="322.5" x2="675.8" y2="365.0" stroke-width="1"/>
<line x1="675.8" y1="365.0" x2="666.0" y2="342.7" stroke-width="1"/>
<line x1="648.2" y1="351.4" x2="675.8" y2="365.0" stroke-width="1"/>
<line x1="542.0" y1="396.0" x2="570.0" y2="407.0" stroke-width="1"/>
<line x1="570.0" y1="407.0" x2="675.8" y2="365.0" stroke-width="1"/>
<line x1="542.0" y1="396.0" x2="535.0" y2="416.0" stroke-width="1"/>
<line x1="535.0" y1="416.0" x2="492.4" y2="552.0" stroke-width="1"/>
<line x1="492.4" y1="552.0" x2="529.7" y2="534.6" stroke-width="1"/>
<line x1="529.7" y1="534.6" x2="570.0" y2="407.0" stroke-width="1"/>
<line x1="535.0" y1="416.0" x2="570.0" y2="407.0" stroke-width="1"/>
<line x1="492.4" y1="552.0" x2="622.5" y2="608.0" stroke-width="1"/>
<line x1="622.5" y1="608.0" x2="641.8" y2="616.2" stroke-width="1"/>
<line x1="641.8" y1="616.2" x2="651.0" y2="586.8" stroke-width="1"/>
<line x1="651.0" y1="586.8" x2="529.7" y2="534.6" stroke-width="1"/>
<line x1="529.7" y1="534.6" x2="622.5" y2="608.0" stroke-width="1"/>
<line x1="622.5" y1="608.0" x2="651.0" y2="586.8" stroke-width="1"/>
<line x1="675.8" y1="365.0" x2="661.1" y2="416.8" stroke-width="1"/>
<line x1="661.1" y1="416.8" x2="654.3" y2="438.0" stroke-width="1"/>
<line x1="654.3" y1="438.0" x2="636.0" y2="494.0" stroke-width="1"/>
<line x1="661.1" y1="416.8" x2="668.0" y2="433.3" stroke-width="1"/>
<line x1="668.0" y1="433.3" x2="654.3" y2="438.0" stroke-width="1"/>
<line x1="675.8" y1="365.0" x2="757.5" y2="544.3" stroke-width="1"/>
<line x1="661.1" y1="416.8" x2="709.5" y2="524.0" stroke-width="1"/>
<line x1="709.5" y1="524.0" x2="757.5" y2="544.3" stroke-width="1"/>
<line x1="696.6" y1="518.4" x2="705.0" y2="515.7" stroke-width="1"/>
<line x1="705.0" y1="515.7" x2="709.5" y2="524.0" stroke-width="1"/>
<line x1="696.6" y1="518.4" x2="709.5" y2="524.0" stroke-width="1"/>
<line x1="636.0" y1="494.0" x2="696.6" y2="518.4" stroke-width="1"/>
<line x1="529.7" y1="534.6" x2="636.0" y2="494.0" stroke-width="1"/>
<line x1="636.0" y1="494.0" x2="757.5" y2="544.3" stroke-width="1"/>
<line x1="529.7" y1="534.6" x2="651.0" y2="586.8" stroke-width="1"/>
<line x1="651.0" y1="586.8" x2="757.5" y2="544.3" stroke-width="1"/>
<line x1="757.5" y1="544.3" x2="751.0" y2="576.0" stroke-width="1"/>
<line x1="751.0" y1="576.0" x2="641.8" y2="616.2" stroke-width="1"/>
<line x1="757.5" y1="544.3" x2="768.0" y2="569.0" stroke-width="1"/>
<line x1="768.0" y1="569.0" x2="751.0" y2="576.0" stroke-width="1"/>
<line x1="641.8" y1="616.2" x2="751.0" y2="576.0" stroke-width="1"/>
<line x1="651.0" y1="586.8" x2="751.0" y2="576.0" stroke-width="1"/>
<line x1="768.0" y1="569.0" x2="879.0" y2="526.0" stroke-width="1"/>
<line x1="879.0" y1="526.0" x2="869.4" y2="502.2" stroke-width="1"/>
<line x1="869.4" y1="502.2" x2="757.5" y2="544.3" stroke-width="1"/>
<line x1="869.4" y1="502.2" x2="853.4" y2="465.8" stroke-width="1"/>
<line x1="853.4" y1="465.8" x2="856.2" y2="457.2" stroke-width="1"/>
<line x1="856.2" y1="457.2" x2="844.2" y2="413.0" stroke-width="1"/>
<line x1="844.2" y1="413.0" x2="788.0" y2="322.5" stroke-width="1"/>
<line x1="844.2" y1="413.0" x2="965.2" y2="465.8" stroke-width="1"/>
<line x1="965.2" y1="465.8" x2="956.4" y2="495.4" stroke-width="1"/>
<line x1="956.4" y1="495.4" x2="879.0" y2="526.0" stroke-width="1"/>
<line x1="965.2" y1="465.8" x2="869.4" y2="502.2" stroke-width="1"/>
<line x1="965.2" y1="465.8" x2="853.4" y2="465.8" stroke-width="1"/>
<line x1="965.2" y1="465.8" x2="856.2" y2="457.2" stroke-width="1"/>
<line x1="956.4" y1="495.4" x2="869.4" y2="502.2" stroke-width="1"/>
<line x1="884.4" y1="286.0" x2="844.2" y2="413.0" stroke-width="1"/>
<line x1="788.0" y1="322.5" x2="869.4" y2="502.2" stroke-width="1"/>
<line x1="570.0" y1="407.0" x2="636.0" y2="494.0" stroke-width="1"/>
<line x1="570.0" y1="407.0" x2="604.0" y2="450.8" stroke-width="1"/>
<line x1="604.0" y1="450.8" x2="636.0" y2="494.0" stroke-width="1"/>
<line x1="604.0" y1="450.8" x2="661.1" y2="416.8" stroke-width="1"/>
<line x1="535.0" y1="416.0" x2="529.7" y2="534.6" stroke-width="1"/>
<line x1="604.0" y1="450.8" x2="675.8" y2="365.0" stroke-width="1"/>
<line x1="542.0" y1="396.0" x2="675.8" y2="365.0" stroke-width="1"/>
<line x1="884.4" y1="286.0" x2="777.2" y2="299.5" stroke-width="1"/>
<line x1="768.0" y1="569.0" x2="869.4" y2="502.2" stroke-width="1"/>
<line x1="788.0" y1="322.5" x2="857.0" y2="503.5" stroke-width="1"/>
<line x1="795.5" y1="320.0" x2="869.4" y2="502.2" stroke-width="1"/>
<line x1="844.2" y1="413.0" x2="869.4" y2="502.2" stroke-width="1"/>
<line x1="636.0" y1="494.0" x2="678.7" y2="455.6" stroke-width="1"/>
<line x1="636.0" y1="494.0" x2="686.7" y2="474.0" stroke-width="1"/>
<line x1="680.5" y1="511.0" x2="696.9" y2="497.7" stroke-width="1"/>
<line x1="675.8" y1="365.0" x2="709.5" y2="524.0" stroke-width="1"/>
<line x1="661.1" y1="416.8" x2="757.5" y2="544.3" stroke-width="1"/>
<line x1="698.5" y1="367.5" x2="757.5" y2="544.3" stroke-width="1"/>
<line x1="570.0" y1="407.0" x2="529.7" y2="534.6" stroke-width="2"/>
<line x1="529.7" y1="534.6" x2="651.0" y2="586.8" stroke-width="2"/>
<line x1="651.0" y1="586.8" x2="757.5" y2="544.3" stroke-width="2"/>
<line x1="768.0" y1="569.0" x2="879.0" y2="526.0" stroke-width="2"/>
<line x1="788.0" y1="322.5" x2="884.4" y2="286.0" stroke-width="2"/>
<line x1="965.2" y1="465.8" x2="869.4" y2="502.2" stroke-width="2"/>
<line x1="570.0" y1="407.0" x2="675.8" y2="365.0" stroke-width="2"/>
<line x1="542.0" y1="396.0" x2="570.0" y2="407.0" stroke-width="2"/>
<line x1="570.0" y1="407.0" x2="585.6" y2="447.0" stroke-width="1"/>
<line x1="570.0" y1="407.0" x2="586.3" y2="447.5" stroke-width="1"/>
<line x1="570.0" y1="407.0" x2="587.0" y2="448.4" stroke-width="1"/>
<line x1="570.0" y1="407.0" x2="587.4" y2="449.7" stroke-width="1"/>
<line x1="570.0" y1="407.0" x2="587.7" y2="451.4" stroke-width="1"/>
<line x1="570.0" y1="407.0" x2="587.8" y2="453.3" stroke-width="1"/>
<line x1="570.0" y1="407.0" x2="587.7" y2="455.6" stroke-width="1"/>
<line x1="570.0" y1="407.0" x2="587.4" y2="458.1" stroke-width="1"/>
<line x1="570.0" y1="407.0" x2="587.0" y2="460.8" stroke-width="1"/>
<line x1="570.0" y1="407.0" x2="586.3" y2="463.7" stroke-width="1"/>
<line x1="570.0" y1="407.0" x2="585.6" y2="466.7" stroke-width="1"/>
<line x1="570.0" y1="407.0" x2="570.4" y2="468.1" stroke-width="1"/>
<line x1="570.0" y1="407.0" x2="571.6" y2="465.1" stroke-width="1"/>
<line x1="570.0" y1="407.0" x2="572.9" y2="462.1" stroke-width="1"/>
<line x1="570.0" y1="407.0" x2="574.2" y2="459.3" stroke-width="1"/>
<line x1="570.0" y1="407.0" x2="575.6" y2="456.7" stroke-width="1"/>
<line x1="570.0" y1="407.0" x2="577.0" y2="454.3" stroke-width="1"/>
<line x1="570.0" y1="407.0" x2="578.4" y2="452.2" stroke-width="1"/>
<line x1="570.0" y1="407.0" x2="579.8" y2="450.4" stroke-width="1"/>
<line x1="570.0" y1="407.0" x2="581.1" y2="449.0" stroke-width="1"/>
<line x1="570.0" y1="407.0" x2="582.4" y2="447.9" stroke-width="1"/>
<line x1="570.0" y1="407.0" x2="583.6" y2="447.2" stroke-width="1"/>
<line x1="570.0" y1="407.0" x2="584.6" y2="446.9" stroke-width="1"/>
<line x1="529.7" y1="534.6" x2="582.4" y2="475.9" stroke-width="1"/>
<line x1="529.7" y1="534.6" x2="581.1" y2="478.9" stroke-width="1"/>
<line x1="529.7" y1="534.6" x2="579.8" y2="481.7" stroke-width="1"/>
<line x1="529.7" y1="534.6" x2="578.4" y2="484.3" stroke-width="1"/>
<line x1="529.7" y1="534.6" x2="577.0" y2="486.7" stroke-width="1"/>
<line x1="529.7" y1="534.6" x2="575.6" y2="488.8" stroke-width="1"/>
<line x1="529.7" y1="534.6" x2="574.2" y2="490.6" stroke-width="1"/>
<line x1="529.7" y1="534.6" x2="572.9" y2="492.0" stroke-width="1"/>
<line x1="529.7" y1="534.6" x2="571.6" y2="493.1" stroke-width="1"/>
<line x1="529.7" y1="534.6" x2="570.4" y2="493.8" stroke-width="1"/>
<line x1="529.7" y1="534.6" x2="569.4" y2="494.1" stroke-width="1"/>
<line x1="529.7" y1="534.6" x2="568.4" y2="494.0" stroke-width="1"/>
<line x1="529.7" y1="534.6" x2="567.7" y2="493.5" stroke-width="1"/>
<line x1="529.7" y1="534.6" x2="567.0" y2="492.6" stroke-width="1"/>
<line x1="529.7" y1="534.6" x2="566.6" y2="491.3" stroke-width="1"/>
<line x1="529.7" y1="534.6" x2="566.3" y2="489.6" stroke-width="1"/>
<line x1="529.7" y1="534.6" x2="566.2" y2="487.7" stroke-width="1"/>
<line x1="529.7" y1="534.6" x2="566.3" y2="485.4" stroke-width="1"/>
<line x1="529.7" y1="534.6" x2="566.6" y2="482.9" stroke-width="1"/>
<line x1="529.7" y1="534.6" x2="567.0" y2="480.2" stroke-width="1"/>
<line x1="529.7" y1="534.6" x2="567.7" y2="477.3" stroke-width="1"/>
<line x1="529.7" y1="534.6" x2="568.4" y2="474.3" stroke-width="1"/>
<line x1="529.7" y1="534.6" x2="569.4" y2="471.2" stroke-width="1"/>
<line x1="529.7" y1="534.6" x2="570.4" y2="468.1" stroke-width="1"/>
<line x1="604.0" y1="450.8" x2="585.6" y2="447.0" stroke-width="1"/>
<line x1="604.0" y1="450.8" x2="587.0" y2="448.4" stroke-width="1"/>
<line x1="604.0" y1="450.8" x2="587.7" y2="451.4" stroke-width="1"/>
<line x1="604.0" y1="450.8" x2="587.7" y2="455.6" stroke-width="1"/>
<line x1="604.0" y1="450.8" x2="587.0" y2="460.8" stroke-width="1"/>
<line x1="604.0" y1="450.8" x2="585.6" y2="466.7" stroke-width="1"/>
<line x1="604.0" y1="450.8" x2="583.6" y2="472.9" stroke-width="1"/>
<line x1="604.0" y1="450.8" x2="575.6" y2="456.7" stroke-width="1"/>
<line x1="604.0" y1="450.8" x2="578.4" y2="452.2" stroke-width="1"/>
<line x1="604.0" y1="450.8" x2="581.1" y2="449.0" stroke-width="1"/>
<line x1="604.0" y1="450.8" x2="583.6" y2="447.2" stroke-width="1"/>
<line x1="636.0" y1="494.0" x2="624.7" y2="520.1" stroke-width="1"/>
<line x1="636.0" y1="494.0" x2="629.0" y2="520.0" stroke-width="1"/>
<line x1="636.0" y1="494.0" x2="634.4" y2="520.5" stroke-width="1"/>
<line x1="636.0" y1="494.0" x2="640.5" y2="521.6" stroke-width="1"/>
<line x1="636.0" y1="494.0" x2="646.8" y2="523.3" stroke-width="1"/>
<line x1="529.7" y1="534.6" x2="643.2" y2="535.7" stroke-width="1"/>
<line x1="529.7" y1="534.6" x2="636.9" y2="533.6" stroke-width="1"/>
<line x1="529.7" y1="534.6" x2="631.2" y2="531.3" stroke-width="1"/>
<line x1="529.7" y1="534.6" x2="626.4" y2="528.8" stroke-width="1"/>
<line x1="529.7" y1="534.6" x2="622.9" y2="526.3" stroke-width="1"/>
<line x1="529.7" y1="534.6" x2="620.9" y2="524.1" stroke-width="1"/>
<line x1="529.7" y1="534.6" x2="620.6" y2="522.3" stroke-width="1"/>
<line x1="529.7" y1="534.6" x2="621.9" y2="520.9" stroke-width="1"/>
<line x1="529.7" y1="534.6" x2="624.7" y2="520.1" stroke-width="1"/>
<line x1="529.7" y1="534.6" x2="629.0" y2="520.0" stroke-width="1"/>
<line x1="529.7" y1="534.6" x2="634.4" y2="520.5" stroke-width="1"/>
<line x1="529.7" y1="534.6" x2="640.5" y2="521.6" stroke-width="1"/>
<line x1="651.0" y1="586.8" x2="668.1" y2="538.1" stroke-width="1"/>
<line x1="651.0" y1="586.8" x2="663.3" y2="539.0" stroke-width="1"/>
<line x1="651.0" y1="586.8" x2="655.6" y2="538.5" stroke-width="1"/>
<line x1="651.0" y1="586.8" x2="646.4" y2="536.6" stroke-width="1"/>
<line x1="651.0" y1="586.8" x2="636.9" y2="533.6" stroke-width="1"/>
<line x1="757.5" y1="544.3" x2="669.4" y2="536.7" stroke-width="1"/>
<line x1="757.5" y1="544.3" x2="668.1" y2="538.1" stroke-width="1"/>
<line x1="757.5" y1="544.3" x2="665.3" y2="538.9" stroke-width="1"/>
<line x1="757.5" y1="544.3" x2="661.0" y2="539.0" stroke-width="1"/>
<line x1="757.5" y1="544.3" x2="655.6" y2="538.5" stroke-width="1"/>
<line x1="757.5" y1="544.3" x2="649.5" y2="537.4" stroke-width="1"/>
<line x1="757.5" y1="544.3" x2="646.8" y2="523.3" stroke-width="1"/>
<line x1="757.5" y1="544.3" x2="653.1" y2="525.4" stroke-width="1"/>
<line x1="757.5" y1="544.3" x2="658.8" y2="527.7" stroke-width="1"/>
<line x1="757.5" y1="544.3" x2="663.6" y2="530.2" stroke-width="1"/>
<line x1="757.5" y1="544.3" x2="667.1" y2="532.7" stroke-width="1"/>
<line x1="757.5" y1="544.3" x2="669.1" y2="534.9" stroke-width="1"/>
<line x1="675.8" y1="365.0" x2="700.7" y2="383.3" stroke-width="1"/>
<line x1="675.8" y1="365.0" x2="699.6" y2="381.1" stroke-width="1"/>
<line x1="675.8" y1="365.0" x2="698.7" y2="378.7" stroke-width="1"/>
<line x1="675.8" y1="365.0" x2="697.8" y2="376.3" stroke-width="1"/>
<line x1="675.8" y1="365.0" x2="697.1" y2="374.0" stroke-width="1"/>
<line x1="675.8" y1="365.0" x2="696.6" y2="371.7" stroke-width="1"/>
<line x1="675.8" y1="365.0" x2="696.2" y2="369.6" stroke-width="1"/>
<line x1="675.8" y1="365.0" x2="696.0" y2="367.6" stroke-width="1"/>
<line x1="675.8" y1="365.0" x2="696.0" y2="365.7" stroke-width="1"/>
<line x1="675.8" y1="365.0" x2="696.2" y2="364.1" stroke-width="1"/>
<line x1="675.8" y1="365.0" x2="696.6" y2="362.7" stroke-width="1"/>
<line x1="675.8" y1="365.0" x2="697.1" y2="361.6" stroke-width="1"/>
<line x1="675.8" y1="365.0" x2="697.7" y2="360.7" stroke-width="1"/>
<line x1="675.8" y1="365.0" x2="698.6" y2="360.2" stroke-width="1"/>
<line x1="675.8" y1="365.0" x2="699.5" y2="359.9" stroke-width="1"/>
<line x1="675.8" y1="365.0" x2="700.6" y2="360.0" stroke-width="1"/>
<line x1="675.8" y1="365.0" x2="701.8" y2="360.4" stroke-width="1"/>
<line x1="675.8" y1="365.0" x2="703.1" y2="361.0" stroke-width="1"/>
<line x1="675.8" y1="365.0" x2="704.4" y2="362.0" stroke-width="1"/>
<line x1="788.0" y1="322.5" x2="699.5" y2="359.9" stroke-width="1"/>
<line x1="788.0" y1="322.5" x2="700.6" y2="360.0" stroke-width="1"/>
<line x1="788.0" y1="322.5" x2="701.8" y2="360.4" stroke-width="1"/>
<line x1="788.0" y1="322.5" x2="703.1" y2="361.0" stroke-width="1"/>
<line x1="788.0" y1="322.5" x2="704.4" y2="362.0" stroke-width="1"/>
<line x1="788.0" y1="322.5" x2="705.7" y2="363.2" stroke-width="1"/>
<line x1="788.0" y1="322.5" x2="707.1" y2="364.7" stroke-width="1"/>
<line x1="788.0" y1="322.5" x2="708.5" y2="366.5" stroke-width="1"/>
<line x1="788.0" y1="322.5" x2="709.8" y2="368.4" stroke-width="1"/>
<line x1="788.0" y1="322.5" x2="711.1" y2="370.4" stroke-width="1"/>
<line x1="788.0" y1="322.5" x2="712.3" y2="372.7" stroke-width="1"/>
<line x1="788.0" y1="322.5" x2="713.4" y2="374.9" stroke-width="1"/>
<line x1="788.0" y1="322.5" x2="714.3" y2="377.3" stroke-width="1"/>
<line x1="788.0" y1="322.5" x2="715.2" y2="379.7" stroke-width="1"/>
<line x1="788.0" y1="322.5" x2="715.9" y2="382.0" stroke-width="1"/>
<line x1="788.0" y1="322.5" x2="716.4" y2="384.3" stroke-width="1"/>
<line x1="788.0" y1="322.5" x2="716.8" y2="386.4" stroke-width="1"/>
<line x1="788.0" y1="322.5" x2="717.0" y2="388.4" stroke-width="1"/>
<line x1="757.5" y1="544.3" x2="714.4" y2="395.8" stroke-width="1"/>
<line x1="757.5" y1="544.3" x2="712.4" y2="396.0" stroke-width="1"/>
<line x1="757.5" y1="544.3" x2="709.9" y2="395.0" stroke-width="1"/>
<line x1="757.5" y1="544.3" x2="707.3" y2="392.8" stroke-width="1"/>
<line x1="757.5" y1="544.3" x2="704.5" y2="389.5" stroke-width="1"/>
<line x1="757.5" y1="544.3" x2="701.9" y2="385.6" stroke-width="1"/>
<line x1="757.5" y1="544.3" x2="699.6" y2="381.1" stroke-width="1"/>
<line x1="757.5" y1="544.3" x2="715.2" y2="379.7" stroke-width="1"/>
<line x1="757.5" y1="544.3" x2="716.4" y2="384.3" stroke-width="1"/>
<line x1="757.5" y1="544.3" x2="717.0" y2="388.4" stroke-width="1"/>
<line x1="757.5" y1="544.3" x2="716.8" y2="391.9" stroke-width="1"/>
<line x1="757.5" y1="544.3" x2="715.9" y2="394.4" stroke-width="1"/>
<line x1="772.7" y1="433.7" x2="714.4" y2="395.8" stroke-width="1"/>
<line x1="772.7" y1="433.7" x2="709.9" y2="395.0" stroke-width="1"/>
<line x1="772.7" y1="433.7" x2="704.5" y2="389.5" stroke-width="1"/>
<line x1="772.7" y1="433.7" x2="713.4" y2="374.9" stroke-width="1"/>
<line x1="772.7" y1="433.7" x2="716.4" y2="384.3" stroke-width="1"/>
<line x1="772.7" y1="433.7" x2="716.8" y2="391.9" stroke-width="1"/>
<line x1="788.0" y1="322.5" x2="768.4" y2="332.9" stroke-width="1"/>
<line x1="788.0" y1="322.5" x2="769.3" y2="332.6" stroke-width="1"/>
<line x1="788.0" y1="322.5" x2="770.3" y2="332.7" stroke-width="1"/>
<line x1="788.0" y1="322.5" x2="771.4" y2="333.1" stroke-width="1"/>
<line x1="788.0" y1="322.5" x2="772.7" y2="333.7" stroke-width="1"/>
<line x1="788.0" y1="322.5" x2="774.0" y2="334.6" stroke-width="1"/>
<line x1="788.0" y1="322.5" x2="775.4" y2="335.8" stroke-width="1"/>
<line x1="788.0" y1="322.5" x2="776.7" y2="337.3" stroke-width="1"/>
<line x1="788.0" y1="322.5" x2="778.1" y2="339.0" stroke-width="1"/>
<line x1="788.0" y1="322.5" x2="779.5" y2="340.8" stroke-width="1"/>
<line x1="788.0" y1="322.5" x2="780.8" y2="342.9" stroke-width="1"/>
<line x1="788.0" y1="322.5" x2="782.1" y2="345.1" stroke-width="1"/>
<line x1="788.0" y1="322.5" x2="783.3" y2="347.3" stroke-width="1"/>
<line x1="788.0" y1="322.5" x2="784.4" y2="349.6" stroke-width="1"/>
<line x1="772.7" y1="433.7" x2="785.6" y2="367.9" stroke-width="1"/>
<line x1="772.7" y1="433.7" x2="782.6" y2="367.7" stroke-width="1"/>
<line x1="772.7" y1="433.7" x2="778.6" y2="365.0" stroke-width="1"/>
<line x1="772.7" y1="433.7" x2="774.5" y2="360.0" stroke-width="1"/>
<line x1="772.7" y1="433.7" x2="770.7" y2="353.5" stroke-width="1"/>
<line x1="772.7" y1="433.7" x2="786.1" y2="354.2" stroke-width="1"/>
<line x1="772.7" y1="433.7" x2="787.5" y2="360.6" stroke-width="1"/>
<line x1="772.7" y1="433.7" x2="787.4" y2="365.4" stroke-width="1"/>
<line x1="884.4" y1="286.0" x2="839.2" y2="348.9" stroke-width="1"/>
<line x1="884.4" y1="286.0" x2="841.1" y2="351.6" stroke-width="1"/>
<line x1="884.4" y1="286.0" x2="841.5" y2="357.4" stroke-width="1"/>
<line x1="884.4" y1="286.0" x2="840.2" y2="365.6" stroke-width="1"/>
<line x1="884.4" y1="286.0" x2="837.6" y2="374.8" stroke-width="1"/>
<line x1="884.4" y1="286.0" x2="828.0" y2="361.3" stroke-width="1"/>
<line x1="884.4" y1="286.0" x2="832.1" y2="354.2" stroke-width="1"/>
<line x1="884.4" y1="286.0" x2="836.0" y2="349.8" stroke-width="1"/>
<line x1="788.0" y1="322.5" x2="839.2" y2="348.9" stroke-width="1"/>
<line x1="788.0" y1="322.5" x2="841.4" y2="353.2" stroke-width="1"/>
<line x1="788.0" y1="322.5" x2="824.4" y2="370.2" stroke-width="1"/>
<line x1="788.0" y1="322.5" x2="829.4" y2="358.7" stroke-width="1"/>
<line x1="788.0" y1="322.5" x2="834.8" y2="350.9" stroke-width="1"/>
<line x1="844.2" y1="413.0" x2="838.6" y2="371.7" stroke-width="1"/>
<line x1="844.2" y1="413.0" x2="836.5" y2="377.9" stroke-width="1"/>
<line x1="844.2" y1="413.0" x2="834.0" y2="383.7" stroke-width="1"/>
<line x1="844.2" y1="413.0" x2="831.3" y2="388.7" stroke-width="1"/>
<line x1="844.2" y1="413.0" x2="828.5" y2="392.6" stroke-width="1"/>
<line x1="844.2" y1="413.0" x2="826.0" y2="395.2" stroke-width="1"/>
<line x1="844.2" y1="413.0" x2="823.8" y2="396.2" stroke-width="1"/>
<line x1="844.2" y1="413.0" x2="822.0" y2="395.6" stroke-width="1"/>
<line x1="844.2" y1="413.0" x2="820.9" y2="393.4" stroke-width="1"/>
<line x1="844.2" y1="413.0" x2="820.5" y2="389.8" stroke-width="1"/>
<line x1="844.2" y1="413.0" x2="820.8" y2="385.1" stroke-width="1"/>
<line x1="844.2" y1="413.0" x2="821.8" y2="379.4" stroke-width="1"/>
<line x1="772.7" y1="433.7" x2="759.1" y2="514.2" stroke-width="1"/>
<line x1="772.7" y1="433.7" x2="757.9" y2="509.8" stroke-width="1"/>
<line x1="772.7" y1="433.7" x2="757.4" y2="506.0" stroke-width="1"/>
<line x1="772.7" y1="433.7" x2="757.7" y2="502.9" stroke-width="1"/>
<line x1="772.7" y1="433.7" x2="758.8" y2="500.9" stroke-width="1"/>
<line x1="772.7" y1="433.7" x2="760.5" y2="500.0" stroke-width="1"/>
<line x1="772.7" y1="433.7" x2="762.8" y2="500.2" stroke-width="1"/>
<line x1="772.7" y1="433.7" x2="765.5" y2="501.7" stroke-width="1"/>
<line x1="772.7" y1="433.7" x2="768.4" y2="504.2" stroke-width="1"/>
<line x1="772.7" y1="433.7" x2="771.3" y2="507.7" stroke-width="1"/>
<line x1="772.7" y1="433.7" x2="774.1" y2="511.8" stroke-width="1"/>
<line x1="772.7" y1="433.7" x2="776.5" y2="516.3" stroke-width="1"/>
<line x1="869.4" y1="502.2" x2="777.9" y2="534.7" stroke-width="1"/>
<line x1="869.4" y1="502.2" x2="775.8" y2="535.0" stroke-width="1"/>
<line x1="869.4" y1="502.2" x2="771.3" y2="507.7" stroke-width="1"/>
<line x1="869.4" y1="502.2" x2="774.1" y2="511.8" stroke-width="1"/>
<line x1="869.4" y1="502.2" x2="776.5" y2="516.3" stroke-width="1"/>
<line x1="869.4" y1="502.2" x2="778.3" y2="520.8" stroke-width="1"/>
<line x1="869.4" y1="502.2" x2="779.5" y2="525.2" stroke-width="1"/>
<line x1="869.4" y1="502.2" x2="780.0" y2="529.0" stroke-width="1"/>
<line x1="869.4" y1="502.2" x2="779.7" y2="532.1" stroke-width="1"/>
<line x1="869.4" y1="502.2" x2="778.6" y2="534.1" stroke-width="1"/>
<line x1="757.5" y1="544.3" x2="776.9" y2="535.0" stroke-width="1"/>
<line x1="757.5" y1="544.3" x2="774.6" y2="534.8" stroke-width="1"/>
<line x1="757.5" y1="544.3" x2="771.9" y2="533.3" stroke-width="1"/>
<line x1="757.5" y1="544.3" x2="769.0" y2="530.8" stroke-width="1"/>
<line x1="757.5" y1="544.3" x2="766.1" y2="527.3" stroke-width="1"/>
<line x1="757.5" y1="544.3" x2="763.3" y2="523.2" stroke-width="1"/>
<line x1="757.5" y1="544.3" x2="760.9" y2="518.7" stroke-width="1"/>
<line x1="772.7" y1="433.7" x2="833.4" y2="493.5" stroke-width="1"/>
<line x1="772.7" y1="433.7" x2="831.2" y2="488.9" stroke-width="1"/>
<line x1="772.7" y1="433.7" x2="829.7" y2="484.4" stroke-width="1"/>
<line x1="772.7" y1="433.7" x2="828.8" y2="480.3" stroke-width="1"/>
<line x1="772.7" y1="433.7" x2="828.8" y2="476.8" stroke-width="1"/>
<line x1="772.7" y1="433.7" x2="829.4" y2="474.3" stroke-width="1"/>
<line x1="772.7" y1="433.7" x2="830.8" y2="472.8" stroke-width="1"/>
<line x1="772.7" y1="433.7" x2="832.9" y2="472.5" stroke-width="1"/>
<line x1="772.7" y1="433.7" x2="835.4" y2="473.3" stroke-width="1"/>
<line x1="772.7" y1="433.7" x2="838.2" y2="475.3" stroke-width="1"/>
<line x1="772.7" y1="433.7" x2="841.2" y2="478.3" stroke-width="1"/>
<line x1="772.7" y1="433.7" x2="844.0" y2="482.1" stroke-width="1"/>
<line x1="869.4" y1="502.2" x2="849.2" y2="507.2" stroke-width="1"/>
<line x1="869.4" y1="502.2" x2="845.9" y2="507.3" stroke-width="1"/>
<line x1="869.4" y1="502.2" x2="841.8" y2="504.7" stroke-width="1"/>
<line x1="869.4" y1="502.2" x2="847.8" y2="488.8" stroke-width="1"/>
<line x1="869.4" y1="502.2" x2="850.3" y2="495.6" stroke-width="1"/>
<line x1="869.4" y1="502.2" x2="851.3" y2="501.5" stroke-width="1"/>
<line x1="869.4" y1="502.2" x2="850.6" y2="505.7" stroke-width="1"/>
<line x1="771.7" y1="355.3" x2="831.6" y2="489.9" stroke-width="1"/>
<line x1="774.8" y1="360.3" x2="830.2" y2="486.2" stroke-width="1"/>
<line x1="778.1" y1="364.4" x2="829.0" y2="481.1" stroke-width="1"/>
<line x1="781.3" y1="367.1" x2="828.8" y2="476.8" stroke-width="1"/>
<line x1="784.1" y1="368.2" x2="829.7" y2="473.9" stroke-width="1"/>
<line x1="786.2" y1="367.5" x2="832.4" y2="472.4" stroke-width="1"/>
<line x1="787.4" y1="365.1" x2="835.4" y2="473.3" stroke-width="1"/>
<line x1="787.6" y1="361.3" x2="838.8" y2="475.9" stroke-width="1"/>
<line x1="786.7" y1="356.5" x2="842.3" y2="479.8" stroke-width="1"/>
<line x1="784.1" y1="349.2" x2="846.6" y2="486.5" stroke-width="1"/>
<line x1="700.5" y1="382.9" x2="760.3" y2="517.4" stroke-width="1"/>
<line x1="703.5" y1="388.0" x2="758.9" y2="513.7" stroke-width="1"/>
<line x1="707.8" y1="393.3" x2="757.5" y2="507.1" stroke-width="1"/>
<line x1="711.0" y1="395.5" x2="757.6" y2="503.2" stroke-width="1"/>
<line x1="714.4" y1="395.8" x2="759.5" y2="500.3" stroke-width="1"/>
<line x1="716.2" y1="394.0" x2="763.0" y2="500.3" stroke-width="1"/>
<line x1="717.0" y1="389.2" x2="766.3" y2="502.3" stroke-width="1"/>
<line x1="716.4" y1="384.3" x2="771.0" y2="507.3" stroke-width="1"/>
<line x1="714.1" y1="376.8" x2="775.3" y2="514.0" stroke-width="1"/>
<line x1="779.8" y1="531.8" x2="842.4" y2="505.2" stroke-width="1"/>
<line x1="780.0" y1="529.4" x2="840.0" y2="503.0" stroke-width="1"/>
<line x1="779.7" y1="526.4" x2="837.7" y2="500.2" stroke-width="1"/>
<line x1="778.5" y1="521.3" x2="834.4" y2="495.3" stroke-width="1"/>
<line x1="777.1" y1="517.6" x2="832.5" y2="491.7" stroke-width="1"/>
<line x1="775.3" y1="514.0" x2="830.9" y2="488.0" stroke-width="1"/>
<line x1="772.2" y1="508.8" x2="829.3" y2="482.7" stroke-width="1"/>
<line x1="769.9" y1="505.8" x2="828.8" y2="479.6" stroke-width="1"/>
<line x1="766.3" y1="502.3" x2="828.9" y2="475.7" stroke-width="1"/>
<line x1="716.8" y1="391.9" x2="779.2" y2="365.5" stroke-width="1"/>
<line x1="716.9" y1="387.7" x2="775.9" y2="361.8" stroke-width="1"/>
<line x1="716.0" y1="382.5" x2="772.6" y2="357.1" stroke-width="1"/>
<line x1="714.1" y1="376.8" x2="769.9" y2="351.6" stroke-width="1"/>
<line x1="711.6" y1="371.3" x2="767.8" y2="346.1" stroke-width="1"/>
<line x1="708.5" y1="366.5" x2="766.6" y2="341.0" stroke-width="1"/>
<line x1="704.1" y1="361.8" x2="766.6" y2="335.7" stroke-width="1"/>
<line x1="636.0" y1="494.0" x2="570.4" y2="493.8" stroke-width="1"/>
<line x1="636.0" y1="494.0" x2="567.1" y2="492.7" stroke-width="1"/>
</g>
<clipPath id="hc1"><ellipse rx="25.0" ry="7.0" transform="translate(577.0,470.5) rotate(-70.0)"/></clipPath>
<ellipse rx="25.0" ry="7.0" transform="translate(577.0,470.5) rotate(-70.0)" fill="#c4c4c4"/>
<g clip-path="url(#hc1)" stroke="#1c1c1c" stroke-width="1" shape-rendering="crispEdges">
<line x1="548.0" y1="432.8" x2="606.0" y2="450.2"/>
<line x1="548.0" y1="436.5" x2="606.0" y2="453.9"/>
<line x1="548.0" y1="440.2" x2="606.0" y2="457.6"/>
<line x1="548.0" y1="443.9" x2="606.0" y2="461.3"/>
<line x1="548.0" y1="447.6" x2="606.0" y2="465.0"/>
<line x1="548.0" y1="451.3" x2="606.0" y2="468.7"/>
<line x1="548.0" y1="455.0" x2="606.0" y2="472.4"/>
<line x1="548.0" y1="458.7" x2="606.0" y2="476.1"/>
<line x1="548.0" y1="462.4" x2="606.0" y2="479.8"/>
<line x1="548.0" y1="466.1" x2="606.0" y2="483.5"/>
<line x1="548.0" y1="469.8" x2="606.0" y2="487.2"/>
<line x1="548.0" y1="473.5" x2="606.0" y2="490.9"/>
<line x1="548.0" y1="477.2" x2="606.0" y2="494.6"/>
<line x1="548.0" y1="480.9" x2="606.0" y2="498.3"/>
<line x1="548.0" y1="484.6" x2="606.0" y2="502.0"/>
<line x1="548.0" y1="488.3" x2="606.0" y2="505.7"/>
</g>
<ellipse rx="25.0" ry="7.0" transform="translate(577.0,470.5) rotate(-70.0)" fill="none" stroke="#19e619" stroke-width="1" shape-rendering="crispEdges"/>
<g fill="none" stroke="#19e619" stroke-width="1" shape-rendering="crispEdges">
<rect x="584.5" y="445.5" width="3" height="3"/>
<rect x="585.5" y="447.5" width="3" height="3"/>
<rect x="586.5" y="451.5" width="3" height="3"/>
<rect x="585.5" y="456.5" width="3" height="3"/>
<rect x="584.5" y="462.5" width="3" height="3"/>
<rect x="583.5" y="468.5" width="3" height="3"/>
<rect x="580.5" y="474.5" width="3" height="3"/>
<rect x="577.5" y="480.5" width="3" height="3"/>
<rect x="575.5" y="485.5" width="3" height="3"/>
<rect x="572.5" y="489.5" width="3" height="3"/>
<rect x="569.5" y="492.5" width="3" height="3"/>
<rect x="567.5" y="492.5" width="3" height="3"/>
</g>
<clipPath id="hc2"><ellipse rx="25.5" ry="6.5" transform="translate(645.0,529.5) rotate(16.5)"/></clipPath>
<ellipse rx="25.5" ry="6.5" transform="translate(645.0,529.5) rotate(16.5)" fill="#c4c4c4"/>
<g clip-path="url(#hc2)" stroke="#1c1c1c" stroke-width="1" shape-rendering="crispEdges">
<line x1="617.5" y1="500.0" x2="612.5" y2="559.0"/>
<line x1="621.8" y1="500.0" x2="616.8" y2="559.0"/>
<line x1="626.1" y1="500.0" x2="621.1" y2="559.0"/>
<line x1="630.4" y1="500.0" x2="625.4" y2="559.0"/>
<line x1="634.7" y1="500.0" x2="629.7" y2="559.0"/>
<line x1="639.0" y1="500.0" x2="634.0" y2="559.0"/>
<line x1="643.3" y1="500.0" x2="638.3" y2="559.0"/>
<line x1="647.6" y1="500.0" x2="642.6" y2="559.0"/>
<line x1="651.9" y1="500.0" x2="646.9" y2="559.0"/>
<line x1="656.2" y1="500.0" x2="651.2" y2="559.0"/>
<line x1="660.5" y1="500.0" x2="655.5" y2="559.0"/>
<line x1="664.8" y1="500.0" x2="659.8" y2="559.0"/>
<line x1="669.1" y1="500.0" x2="664.1" y2="559.0"/>
<line x1="673.4" y1="500.0" x2="668.4" y2="559.0"/>
</g>
<ellipse rx="25.5" ry="6.5" transform="translate(645.0,529.5) rotate(16.5)" fill="none" stroke="#19e619" stroke-width="1" shape-rendering="crispEdges"/>
<g fill="none" stroke="#19e619" stroke-width="1" shape-rendering="crispEdges">
<rect x="668.5" y="534.5" width="3" height="3"/>
<rect x="667.5" y="532.5" width="3" height="3"/>
<rect x="664.5" y="530.5" width="3" height="3"/>
<rect x="660.5" y="527.5" width="3" height="3"/>
<rect x="654.5" y="525.5" width="3" height="3"/>
<rect x="648.5" y="522.5" width="3" height="3"/>
<rect x="641.5" y="520.5" width="3" height="3"/>
<rect x="635.5" y="519.5" width="3" height="3"/>
<rect x="629.5" y="518.5" width="3" height="3"/>
<rect x="624.5" y="518.5" width="3" height="3"/>
<rect x="620.5" y="519.5" width="3" height="3"/>
<rect x="619.5" y="520.5" width="3" height="3"/>
</g>
<clipPath id="hc3"><ellipse rx="19.5" ry="7.5" transform="translate(706.5,378.0) rotate(66.0)"/></clipPath>
<ellipse rx="19.5" ry="7.5" transform="translate(706.5,378.0) rotate(66.0)" fill="#c4c4c4"/>
<g clip-path="url(#hc3)" stroke="#1c1c1c" stroke-width="1" shape-rendering="crispEdges">
<line x1="683.0" y1="347.4" x2="730.0" y2="361.6"/>
<line x1="683.0" y1="351.1" x2="730.0" y2="365.2"/>
<line x1="683.0" y1="354.8" x2="730.0" y2="368.9"/>
<line x1="683.0" y1="358.5" x2="730.0" y2="372.6"/>
<line x1="683.0" y1="362.2" x2="730.0" y2="376.3"/>
<line x1="683.0" y1="365.9" x2="730.0" y2="380.0"/>
<line x1="683.0" y1="369.6" x2="730.0" y2="383.7"/>
<line x1="683.0" y1="373.3" x2="730.0" y2="387.4"/>
<line x1="683.0" y1="377.0" x2="730.0" y2="391.1"/>
<line x1="683.0" y1="380.7" x2="730.0" y2="394.8"/>
<line x1="683.0" y1="384.4" x2="730.0" y2="398.5"/>
<line x1="683.0" y1="388.1" x2="730.0" y2="402.2"/>
<line x1="683.0" y1="391.8" x2="730.0" y2="405.9"/>
</g>
<ellipse rx="19.5" ry="7.5" transform="translate(706.5,378.0) rotate(66.0)" fill="none" stroke="#19e619" stroke-width="1" shape-rendering="crispEdges"/>
<g fill="none" stroke="#19e619" stroke-width="1" shape-rendering="crispEdges">
<rect x="713.5" y="394.5" width="3" height="3"/>
<rect x="714.5" y="392.5" width="3" height="3"/>
<rect x="715.5" y="389.5" width="3" height="3"/>
<rect x="715.5" y="385.5" width="3" height="3"/>
<rect x="714.5" y="380.5" width="3" height="3"/>
<rect x="712.5" y="375.5" width="3" height="3"/>
<rect x="710.5" y="370.5" width="3" height="3"/>
<rect x="707.5" y="366.5" width="3" height="3"/>
<rect x="705.5" y="362.5" width="3" height="3"/>
<rect x="702.5" y="360.5" width="3" height="3"/>
<rect x="699.5" y="358.5" width="3" height="3"/>
<rect x="697.5" y="358.5" width="3" height="3"/>
</g>
<clipPath id="hc4"><ellipse rx="19.5" ry="7.0" transform="translate(777.0,350.4) rotate(63.8)"/></clipPath>
<ellipse rx="19.5" ry="7.0" transform="translate(777.0,350.4) rotate(63.8)" fill="#c4c4c4"/>
<g clip-path="url(#hc4)" stroke="#1c1c1c" stroke-width="1" shape-rendering="crispEdges">
<line x1="753.5" y1="319.8" x2="800.5" y2="333.9"/>
<line x1="753.5" y1="323.5" x2="800.5" y2="337.6"/>
<line x1="753.5" y1="327.2" x2="800.5" y2="341.3"/>
<line x1="753.5" y1="330.9" x2="800.5" y2="345.0"/>
<line x1="753.5" y1="334.6" x2="800.5" y2="348.7"/>
<line x1="753.5" y1="338.3" x2="800.5" y2="352.4"/>
<line x1="753.5" y1="342.0" x2="800.5" y2="356.1"/>
<line x1="753.5" y1="345.7" x2="800.5" y2="359.8"/>
<line x1="753.5" y1="349.4" x2="800.5" y2="363.5"/>
<line x1="753.5" y1="353.1" x2="800.5" y2="367.2"/>
<line x1="753.5" y1="356.8" x2="800.5" y2="370.9"/>
<line x1="753.5" y1="360.5" x2="800.5" y2="374.6"/>
<line x1="753.5" y1="364.2" x2="800.5" y2="378.3"/>
</g>
<ellipse rx="19.5" ry="7.0" transform="translate(777.0,350.4) rotate(63.8)" fill="none" stroke="#19e619" stroke-width="1" shape-rendering="crispEdges"/>
<g fill="none" stroke="#19e619" stroke-width="1" shape-rendering="crispEdges">
<rect x="784.5" y="366.5" width="3" height="3"/>
<rect x="785.5" y="364.5" width="3" height="3"/>
<rect x="786.5" y="361.5" width="3" height="3"/>
<rect x="785.5" y="357.5" width="3" height="3"/>
<rect x="784.5" y="352.5" width="3" height="3"/>
<rect x="782.5" y="347.5" width="3" height="3"/>
<rect x="780.5" y="343.5" width="3" height="3"/>
<rect x="777.5" y="338.5" width="3" height="3"/>
<rect x="774.5" y="335.5" width="3" height="3"/>
<rect x="771.5" y="332.5" width="3" height="3"/>
<rect x="769.5" y="331.5" width="3" height="3"/>
<rect x="767.5" y="331.5" width="3" height="3"/>
</g>
<clipPath id="hc5"><ellipse rx="25.0" ry="7.0" transform="translate(831.0,372.5) rotate(-70.9)"/></clipPath>
<ellipse rx="25.0" ry="7.0" transform="translate(831.0,372.5) rotate(-70.9)" fill="#c4c4c4"/>
<g clip-path="url(#hc5)" stroke="#1c1c1c" stroke-width="1" shape-rendering="crispEdges">
<line x1="802.0" y1="334.8" x2="860.0" y2="352.2"/>
<line x1="802.0" y1="338.5" x2="860.0" y2="355.9"/>
<line x1="802.0" y1="342.2" x2="860.0" y2="359.6"/>
<line x1="802.0" y1="345.9" x2="860.0" y2="363.3"/>
<line x1="802.0" y1="349.6" x2="860.0" y2="367.0"/>
<line x1="802.0" y1="353.3" x2="860.0" y2="370.7"/>
<line x1="802.0" y1="357.0" x2="860.0" y2="374.4"/>
<line x1="802.0" y1="360.7" x2="860.0" y2="378.1"/>
<line x1="802.0" y1="364.4" x2="860.0" y2="381.8"/>
<line x1="802.0" y1="368.1" x2="860.0" y2="385.5"/>
<line x1="802.0" y1="371.8" x2="860.0" y2="389.2"/>
<line x1="802.0" y1="375.5" x2="860.0" y2="392.9"/>
<line x1="802.0" y1="379.2" x2="860.0" y2="396.6"/>
<line x1="802.0" y1="382.9" x2="860.0" y2="400.3"/>
<line x1="802.0" y1="386.6" x2="860.0" y2="404.0"/>
<line x1="802.0" y1="390.3" x2="860.0" y2="407.7"/>
</g>
<ellipse rx="25.0" ry="7.0" transform="translate(831.0,372.5) rotate(-70.9)" fill="none" stroke="#19e619" stroke-width="1" shape-rendering="crispEdges"/>
<g fill="none" stroke="#19e619" stroke-width="1" shape-rendering="crispEdges">
<rect x="838.5" y="347.5" width="3" height="3"/>
<rect x="839.5" y="349.5" width="3" height="3"/>
<rect x="840.5" y="353.5" width="3" height="3"/>
<rect x="839.5" y="358.5" width="3" height="3"/>
<rect x="838.5" y="363.5" width="3" height="3"/>
<rect x="837.5" y="370.5" width="3" height="3"/>
<rect x="834.5" y="376.5" width="3" height="3"/>
<rect x="832.5" y="382.5" width="3" height="3"/>
<rect x="829.5" y="387.5" width="3" height="3"/>
<rect x="826.5" y="391.5" width="3" height="3"/>
<rect x="823.5" y="394.5" width="3" height="3"/>
<rect x="821.5" y="394.5" width="3" height="3"/>
</g>
<clipPath id="hc6"><ellipse rx="19.5" ry="7.5" transform="translate(768.7,517.5) rotate(62.0)"/></clipPath>
<ellipse rx="19.5" ry="7.5" transform="translate(768.7,517.5) rotate(62.0)" fill="#c4c4c4"/>
<g clip-path="url(#hc6)" stroke="#1c1c1c" stroke-width="1" shape-rendering="crispEdges">
<line x1="745.2" y1="486.9" x2="792.2" y2="501.1"/>
<line x1="745.2" y1="490.6" x2="792.2" y2="504.8"/>
<line x1="745.2" y1="494.3" x2="792.2" y2="508.4"/>
<line x1="745.2" y1="498.0" x2="792.2" y2="512.1"/>
<line x1="745.2" y1="501.7" x2="792.2" y2="515.8"/>
<line x1="745.2" y1="505.4" x2="792.2" y2="519.5"/>
<line x1="745.2" y1="509.2" x2="792.2" y2="523.2"/>
<line x1="745.2" y1="512.9" x2="792.2" y2="527.0"/>
<line x1="745.2" y1="516.6" x2="792.2" y2="530.7"/>
<line x1="745.2" y1="520.3" x2="792.2" y2="534.4"/>
<line x1="745.2" y1="524.0" x2="792.2" y2="538.1"/>
<line x1="745.2" y1="527.7" x2="792.2" y2="541.8"/>
<line x1="745.2" y1="531.4" x2="792.2" y2="545.5"/>
</g>
<ellipse rx="19.5" ry="7.5" transform="translate(768.7,517.5) rotate(62.0)" fill="none" stroke="#19e619" stroke-width="1" shape-rendering="crispEdges"/>
<g fill="none" stroke="#19e619" stroke-width="1" shape-rendering="crispEdges">
<rect x="776.5" y="532.5" width="3" height="3"/>
<rect x="778.5" y="530.5" width="3" height="3"/>
<rect x="778.5" y="527.5" width="3" height="3"/>
<rect x="778.5" y="523.5" width="3" height="3"/>
<rect x="776.5" y="519.5" width="3" height="3"/>
<rect x="774.5" y="514.5" width="3" height="3"/>
<rect x="772.5" y="509.5" width="3" height="3"/>
<rect x="769.5" y="505.5" width="3" height="3"/>
<rect x="766.5" y="502.5" width="3" height="3"/>
<rect x="763.5" y="499.5" width="3" height="3"/>
<rect x="760.5" y="498.5" width="3" height="3"/>
<rect x="758.5" y="498.5" width="3" height="3"/>
</g>
<clipPath id="hc7"><ellipse rx="19.5" ry="7.5" transform="translate(840.0,490.0) rotate(62.0)"/></clipPath>
<ellipse rx="19.5" ry="7.5" transform="translate(840.0,490.0) rotate(62.0)" fill="#c4c4c4"/>
<g clip-path="url(#hc7)" stroke="#1c1c1c" stroke-width="1" shape-rendering="crispEdges">
<line x1="816.5" y1="459.4" x2="863.5" y2="473.6"/>
<line x1="816.5" y1="463.1" x2="863.5" y2="477.2"/>
<line x1="816.5" y1="466.8" x2="863.5" y2="480.9"/>
<line x1="816.5" y1="470.5" x2="863.5" y2="484.6"/>
<line x1="816.5" y1="474.2" x2="863.5" y2="488.3"/>
<line x1="816.5" y1="477.9" x2="863.5" y2="492.0"/>
<line x1="816.5" y1="481.6" x2="863.5" y2="495.7"/>
<line x1="816.5" y1="485.3" x2="863.5" y2="499.4"/>
<line x1="816.5" y1="489.0" x2="863.5" y2="503.1"/>
<line x1="816.5" y1="492.7" x2="863.5" y2="506.8"/>
<line x1="816.5" y1="496.4" x2="863.5" y2="510.5"/>
<line x1="816.5" y1="500.1" x2="863.5" y2="514.2"/>
<line x1="816.5" y1="503.8" x2="863.5" y2="517.9"/>
</g>
<ellipse rx="19.5" ry="7.5" transform="translate(840.0,490.0) rotate(62.0)" fill="none" stroke="#19e619" stroke-width="1" shape-rendering="crispEdges"/>
<g fill="none" stroke="#19e619" stroke-width="1" shape-rendering="crispEdges">
<rect x="848.5" y="505.5" width="3" height="3"/>
<rect x="849.5" y="503.5" width="3" height="3"/>
<rect x="849.5" y="500.5" width="3" height="3"/>
<rect x="849.5" y="496.5" width="3" height="3"/>
<rect x="848.5" y="491.5" width="3" height="3"/>
<rect x="846.5" y="487.5" width="3" height="3"/>
<rect x="843.5" y="482.5" width="3" height="3"/>
<rect x="840.5" y="478.5" width="3" height="3"/>
<rect x="837.5" y="474.5" width="3" height="3"/>
<rect x="834.5" y="472.5" width="3" height="3"/>
<rect x="831.5" y="471.5" width="3" height="3"/>
<rect x="829.5" y="471.5" width="3" height="3"/>
</g>
<g fill="none" stroke="#19e619" stroke-width="1" shape-rendering="crispEdges">
<rect x="540.5" y="394.5" width="2" height="2"/>
<rect x="568.5" y="406.5" width="2" height="2"/>
<rect x="534.5" y="414.5" width="2" height="2"/>
<rect x="491.5" y="550.5" width="2" height="2"/>
<rect x="528.5" y="533.5" width="2" height="2"/>
<rect x="650.5" y="585.5" width="2" height="2"/>
<rect x="621.5" y="606.5" width="2" height="2"/>
<rect x="640.5" y="615.5" width="2" height="2"/>
<rect x="664.5" y="341.5" width="2" height="2"/>
<rect x="647.5" y="350.5" width="2" height="2"/>
<rect x="674.5" y="364.5" width="2" height="2"/>
<rect x="854.5" y="272.5" width="2" height="2"/>
<rect x="883.5" y="284.5" width="2" height="2"/>
<rect x="776.5" y="298.5" width="2" height="2"/>
<rect x="786.5" y="321.5" width="2" height="2"/>
<rect x="756.5" y="543.5" width="2" height="2"/>
<rect x="766.5" y="568.5" width="2" height="2"/>
<rect x="750.5" y="574.5" width="2" height="2"/>
<rect x="964.5" y="464.5" width="2" height="2"/>
<rect x="955.5" y="494.5" width="2" height="2"/>
<rect x="843.5" y="412.5" width="2" height="2"/>
<rect x="855.5" y="456.5" width="2" height="2"/>
<rect x="852.5" y="464.5" width="2" height="2"/>
<rect x="868.5" y="501.5" width="2" height="2"/>
<rect x="878.5" y="524.5" width="2" height="2"/>
<rect x="602.5" y="449.5" width="2" height="2"/>
</g>
</svg>
<!-- MODEL-END -->
</div>

<div id="partmenu" class="abs" style="left:253px;top:43px;width:232px;height:613px;box-sizing:border-box;background:#dcdad5;border:1px solid #000;"></div>
<div class="hline" style="left:254px;top:44px;width:229px;background:#fff;"></div>
<div class="vline" style="left:254px;top:44px;height:610px;background:#fff;"></div>
<div class="hline" style="left:255px;top:654px;width:229px;background:#8e8c88;"></div>
<div class="vline" style="left:483px;top:45px;height:610px;background:#8e8c88;"></div>
<div class="hline" style="left:260px;top:85px;width:218px;background:#8e8c88;"></div>
<div class="hline" style="left:260px;top:86px;width:218px;background:#fff;"></div>
<div class="hline" style="left:260px;top:150px;width:218px;background:#8e8c88;"></div>
<div class="hline" style="left:260px;top:151px;width:218px;background:#fff;"></div>
<div class="hline" style="left:260px;top:272px;width:218px;background:#8e8c88;"></div>
<div class="hline" style="left:260px;top:273px;width:218px;background:#fff;"></div>
<div class="hline" style="left:260px;top:356px;width:218px;background:#8e8c88;"></div>
<div class="hline" style="left:260px;top:357px;width:218px;background:#fff;"></div>
<div class="hline" style="left:260px;top:630px;width:218px;background:#8e8c88;"></div>
<div class="hline" style="left:260px;top:631px;width:218px;background:#fff;"></div>
<div class="t" style="left:281px;top:45px;color:#000;letter-spacing:0.27px;">Import CAD...</div>
<div class="t" style="left:281px;top:64px;color:#000;letter-spacing:0.16px;">Export CAD...</div>
<div class="t" style="left:281px;top:91px;color:#000;letter-spacing:0.40px;">Primitives</div>
<div class="abs" style="left:471px;top:95px;width:0;height:0;border-left:6px solid #000;border-top:4.5px solid transparent;border-bottom:4.5px solid transparent;"></div>
<div class="t" style="left:281px;top:110px;color:#000;letter-spacing:0.42px;">Create primitives...</div>
<div class="t" style="left:281px;top:129px;color:#000;letter-spacing:0.31px;">Shape builder...</div>
<div class="t" style="left:281px;top:156px;color:#8e8c88;letter-spacing:0.34px;">Create shape from mesh...</div>
<div class="t" style="left:281px;top:175px;color:#000;letter-spacing:0.40px;">Convert to solid</div>
<div class="t" style="left:281px;top:194px;color:#000;letter-spacing:0.14px;">Reverse shapes</div>
<div class="t" style="left:281px;top:213px;color:#000;letter-spacing:0.38px;">Create simple copy</div>
<div class="abs" style="left:255px;top:231px;width:228px;height:19px;box-sizing:border-box;background:#4b6983;border-top:1px solid #5f87ad;border-left:1px solid #5f87ad;border-bottom:1px solid #000;border-right:1px solid #000;"></div>
<div class="t" style="left:281px;top:232px;color:#fff;letter-spacing:0.18px;">Refine shape</div>
<div class="t" style="left:281px;top:251px;color:#000;letter-spacing:0.32px;">Check Geometry</div>
<div class="t" style="left:281px;top:278px;color:#000;letter-spacing:0.33px;">Boolean</div>
<div class="abs" style="left:471px;top:282px;width:0;height:0;border-left:6px solid #000;border-top:4.5px solid transparent;border-bottom:4.5px solid transparent;"></div>
<div class="t" style="left:281px;top:297px;color:#000;letter-spacing:-0.15px;">Join</div>
<div class="abs" style="left:471px;top:301px;width:0;height:0;border-left:6px solid #000;border-top:4.5px solid transparent;border-bottom:4.5px solid transparent;"></div>
<div class="t" style="left:281px;top:316px;color:#000;letter-spacing:0.57px;">Split</div>
<div class="abs" style="left:471px;top:320px;width:0;height:0;border-left:6px solid #000;border-top:4.5px solid transparent;border-bottom:4.5px solid transparent;"></div>
<div class="t" style="left:281px;top:335px;color:#000;letter-spacing:0.39px;">Compound</div>
<div class="abs" style="left:471px;top:339px;width:0;height:0;border-left:6px solid #000;border-top:4.5px solid transparent;border-bottom:4.5px solid transparent;"></div>
<div class="t" style="left:281px;top:362px;color:#8e8c88;letter-spacing:0.36px;">Section</div>
<div class="t" style="left:281px;top:381px;color:#000;letter-spacing:0.19px;">Cross-sections...</div>
<div class="t" style="left:281px;top:400px;color:#000;letter-spacing:0.38px;">Make face from wires</div>
<div class="t" style="left:281px;top:419px;color:#000;letter-spacing:0.43px;">Extrude...</div>
<div class="t" style="left:281px;top:438px;color:#000;letter-spacing:0.20px;">Revolve...</div>
<div class="t" style="left:281px;top:457px;color:#000;letter-spacing:0.44px;">Mirroring...</div>
<div class="t" style="left:281px;top:476px;color:#000;letter-spacing:0.23px;">Fillet...</div>
<div class="t" style="left:281px;top:495px;color:#000;letter-spacing:0.31px;">Chamfer...</div>
<div class="t" style="left:281px;top:514px;color:#000;letter-spacing:0.36px;">Create ruled surface</div>
<div class="t" style="left:281px;top:533px;color:#000;letter-spacing:0.44px;">Loft...</div>
<div class="t" style="left:281px;top:552px;color:#000;letter-spacing:0.19px;">Sweep...</div>
<div class="t" style="left:281px;top:571px;color:#000;letter-spacing:0.32px;">3D Offset...</div>
<div class="t" style="left:281px;top:590px;color:#000;letter-spacing:0.32px;">2D Offset...</div>
<div class="t" style="left:281px;top:609px;color:#000;letter-spacing:0.21px;">Thickness...</div>
<div class="t" style="left:281px;top:636px;color:#000;letter-spacing:0.52px;">Attachment...</div>
<!-- MENU-ICONS-START -->
<svg class="abs" style="left:253px;top:43px;" width="232" height="613" viewBox="253 43 232 613">
<!-- import -->
<g>
<path d="M262 48.6 L270.6 44.8 L276 52.8 L274.6 56.2 L267.4 59.6 Z" fill="#f2f2f0" stroke="#8c8c8a" stroke-width="0.7" stroke-linejoin="round"/>
<path d="M274.6 56.2 L273 54.6 L275.6 53.4 Z" fill="#8c8c8a"/>
<path d="M260.4 52.8 L264.6 52.8 L264.6 50.6 L268.6 54.4 L264.6 58.2 L264.6 56 L260.4 56 Z" fill="#6cc820" stroke="#3f8a10" stroke-width="0.6"/>
</g>
<!-- export -->
<g>
<path d="M262 67.6 L270.6 63.8 L276 71.8 L274.6 75.2 L267.4 78.6 Z" fill="#f2f2f0" stroke="#8c8c8a" stroke-width="0.7" stroke-linejoin="round"/>
<path d="M274.6 75.2 L273 73.6 L275.6 72.4 Z" fill="#8c8c8a"/>
<path d="M268.4 69.8 L264.4 69.8 L264.4 67.6 L260.4 71.4 L264.4 75.2 L264.4 73 L268.4 73 Z" fill="#d81414" stroke="#8a0808" stroke-width="0.6"/>
</g>
<!-- create primitives -->
<use href="#icoPrims" transform="translate(260,110.5) scale(0.667) translate(-201,-92)"/>
<!-- shape builder -->
<g>
<path d="M262 131.2 L264 133.2 L262 135.2 L260 133.2 Z" fill="#dcdad5" stroke="#7c8486" stroke-width="0.8"/>
<rect x="268.6" y="129" width="7.4" height="1.6" fill="#7c8486"/>
<rect x="271.6" y="130" width="1.4" height="3" fill="#7c8486"/>
<rect x="271" y="135" width="5.2" height="5.6" fill="#9a9e9c" stroke="#70746e" stroke-width="0.6"/>
<rect x="272.6" y="136.6" width="2" height="2.4" fill="#dcdad5"/>
<circle cx="266" cy="131.6" r="1.7" fill="#e01414"/>
<circle cx="273" cy="132.6" r="1.6" fill="#e01414"/>
<circle cx="271.6" cy="142" r="1.7" fill="#e01414"/>
<path d="M260.2 138.8 L264.6 137.4 L269 138.6 L264.8 140.2 Z" fill="#f8ea48" stroke="#6e5e08" stroke-width="0.6"/>
<path d="M260.2 138.8 L264.8 140.2 L264.8 144.6 L260.2 143.4 Z" fill="#f2dc20" stroke="#6e5e08" stroke-width="0.6"/>
<path d="M264.8 140.2 L269 138.6 L269 143 L264.8 144.6 Z" fill="#d4b408" stroke="#6e5e08" stroke-width="0.6"/>
</g>
<!-- create shape from mesh (disabled) -->
<g stroke="#8a8a88" stroke-width="0.6" stroke-linejoin="round">
<path d="M260.8 159 L264.4 157 L268 158.8 L268 163.6 L264.4 165.8 L260.8 163.8 Z" fill="#b4b4b2"/>
<path d="M260.8 159 L264.4 160.8 L268 158.8 M264.4 160.8 L264.4 165.8" fill="none"/>
<path d="M268.4 164.4 L272.2 162.2 L276 164.2 L276 169.2 L272.2 171.4 L268.4 169.4 Z" fill="#a6a6a4"/>
<path d="M268.4 164.4 L272.2 166.4 L276 164.2 M272.2 166.4 L272.2 171.4" fill="none"/>
<path d="M262.4 167 L266.4 170 L265.2 166.6" fill="#b4b4b2"/>
</g>
<!-- simple copy cube -->
<use href="#icoCube" transform="translate(260.3,213.6) scale(1.02,1.0) translate(-512.5,-56.6)"/>
<!-- refine shape -->
<g fill="#4d7fc0" stroke="#2c4a72" stroke-width="0.7">
<path d="M261.4 237.6 L263 234.6 L265.6 234 L265.4 236 L263.4 238.4 Z"/>
<path d="M268.8 236.6 C269.6 234 273.6 233.2 275.2 235.2 C275.6 237.2 272.8 240.4 269.6 240 Z"/>
<path d="M261.6 243.2 C262.6 241 266.8 240.8 267.6 243 C267.6 245 264.8 247 261.6 246.6 Z"/>
</g>
<!-- check geometry -->
<g>
<path d="M267.6 254 L273.6 264.6 A6 1.6 0 0 1 261.8 264.6 Z" fill="#5a8fd0" stroke="#2a5a9a" stroke-width="0.6"/>
<path d="M270.4 257.6 L272.6 259.8 L271.4 261 L269.4 258.8 Z" fill="#e89818"/>
<circle cx="267.8" cy="254.6" r="3.4" fill="#dde8f0" fill-opacity="0.85" stroke="#b0b4b6" stroke-width="0.8"/>
</g>
<!-- section (disabled) -->
<g stroke="#9a9896" stroke-width="0.7" stroke-linejoin="round">
<path d="M261.2 363.4 L271.6 364.8 L271.6 376.8 L261.2 375.2 Z" fill="#b2b0ac"/>
<path d="M271.6 364.8 L274.8 366.4 L274.8 374 L271.6 376.8 Z" fill="#c4c2be"/>
<rect x="263.4" y="366.4" width="6" height="7" fill="#a4a29e"/>
</g>
<!-- cross-sections -->
<g>
<path d="M264.4 383.2 L269 381.4 L273.2 382.6 L273.2 394.6 L268.6 396.4 L264.4 395 Z" fill="#4f86c8" stroke="#1e4478" stroke-width="0.6"/>
<path d="M264.4 383.2 L268.6 384.6 L273.2 382.6 M268.6 384.6 L268.6 396.4" fill="none" stroke="#1e4478" stroke-width="0.6"/>
<path d="M268.6 384.6 L273.2 382.6 L273.2 394.6 L268.6 396.4 Z" fill="#2f5f9f"/>
<path d="M260.4 388.6 L263.6 386.4 L276.2 386.4 L273 388.6 Z" fill="#e01818"/>
<path d="M260.4 393.4 L263.6 391.2 L276.2 391.2 L273 393.4 Z" fill="#e01818"/>
</g>
<!-- extrude / revolve / mirror / fillet / chamfer / ruled -->
<use href="#icoExtrude" transform="translate(260,419.5) scale(0.667) translate(-949,-52)"/>
<use href="#icoRevolve" transform="translate(260,438.5) scale(0.667) translate(-985,-52)"/>
<use href="#icoMirror" transform="translate(260,457.5) scale(0.667) translate(-1021,-52)"/>
<use href="#icoFillet" transform="translate(260,476.5) scale(0.667) translate(-1057,-52)"/>
<use href="#icoChamfer" transform="translate(260,495.5) scale(0.667) translate(-1093,-52)"/>
<g>
<path d="M261 518.6 L275 515 L275 525.4 L261 528.6 Z" fill="#5d8fcb" stroke="#1e4478" stroke-width="0.5"/>
<rect x="260.2" y="517.8" width="1.8" height="11.6" fill="#d40808"/><rect x="274.2" y="514.2" width="1.8" height="11.8" fill="#d40808"/>
</g>
<!-- loft -->
<g stroke-linejoin="round">
<path d="M261.6 540 L266.4 535.6 L274.2 537 L274.2 547.4 L266 546.4 L261.6 546.2 Z" fill="#3f74ba" stroke="#1e4478" stroke-width="0.5"/>
<path d="M261.6 540 L266 540.6 L274.2 537 M266 540.6 L266 546.4" fill="none" stroke="#1e4478" stroke-width="0.5"/>
<path d="M266.4 535.6 L274.2 537 L274.2 547.4" fill="none" stroke="#d81414" stroke-width="1.4"/>
<rect x="261.6" y="540.2" width="4.4" height="5.8" fill="#3f74ba" stroke="#d81414" stroke-width="1.3"/>
</g>
<!-- sweep -->
<g stroke-linejoin="round">
<path d="M261 560.4 L265.6 554 L271.4 555.6 L275.4 561 L266 566.8 L261 566 Z" fill="#3f74ba" stroke="#1e4478" stroke-width="0.5"/>
<path d="M265.6 554 L271.4 555.6 L275.4 561" fill="none" stroke="#d81414" stroke-width="1.4"/>
<rect x="261" y="560.6" width="4.6" height="5.6" fill="#5a1010" stroke="#d81414" stroke-width="1.3"/>
<circle cx="274.2" cy="554.2" r="1.3" fill="#d81414"/>
</g>
<!-- 3D offset -->
<g stroke="#1e4478" stroke-width="0.5" stroke-linejoin="round">
<path d="M267.4 571 L271.4 575.8 L269.4 575.8 L269.4 579 L265.4 579 L265.4 575.8 L263.4 575.8 Z" fill="#4f86c8"/>
<path d="M260.8 580.8 L266 579 L274.4 579.4 L269.2 581.4 Z" fill="#4f86c8"/>
<path d="M260.8 585.8 L266 583.8 L274.4 584.2 L268.8 586.6 Z" fill="#6a9ad4"/>
</g>
<!-- 2D offset -->
<g fill="none" stroke="#2f5f9f" stroke-linecap="round">
<path d="M262 593 L265 591.4 L274 591.6 L274 598.4 C274 601.6 271 603.8 267.6 604.4" stroke-width="2"/>
<path d="M264.6 596.4 L270.4 595.6 L270.4 598.2 C270.4 599.8 269 600.8 267 600.6" stroke-width="1.4"/>
</g>
<!-- thickness -->
<g stroke="#1e4478" stroke-width="0.5" stroke-linejoin="round">
<path d="M260.6 614.6 L267.6 612.6 L276 614 L269 616.2 Z" fill="#7daae0"/>
<path d="M260.6 614.6 L269 616.2 L269 621.6 L260.6 619.6 Z" fill="#4f86c8"/>
<path d="M269 616.2 L276 614 L276 619 L269 621.6 Z" fill="#2f5f9f"/>
</g>
<!-- attachment -->
<g>
<path d="M261 641.4 L262.6 640.2 L272.4 649.6 L270.8 651.2 Z" fill="#4f86c8" stroke="#1e4478" stroke-width="0.4"/>
<path d="M269.6 638.4 L273.6 636.8 L276 640.6 L273 642.8 Z" fill="#4f86c8" stroke="#1e4478" stroke-width="0.4"/>
<path d="M264.4 642.4 C266 639.4 269 638.6 270.8 640 M267.6 646 C269.6 644.4 271.2 643.6 273.2 644 M266 644.2 L271.8 648.4 M269.6 640.4 L273 647.8" fill="none" stroke="#d81414" stroke-width="1.2"/>
</g>
</svg>
<!-- MENU-ICONS-END -->


</body>
</html>
